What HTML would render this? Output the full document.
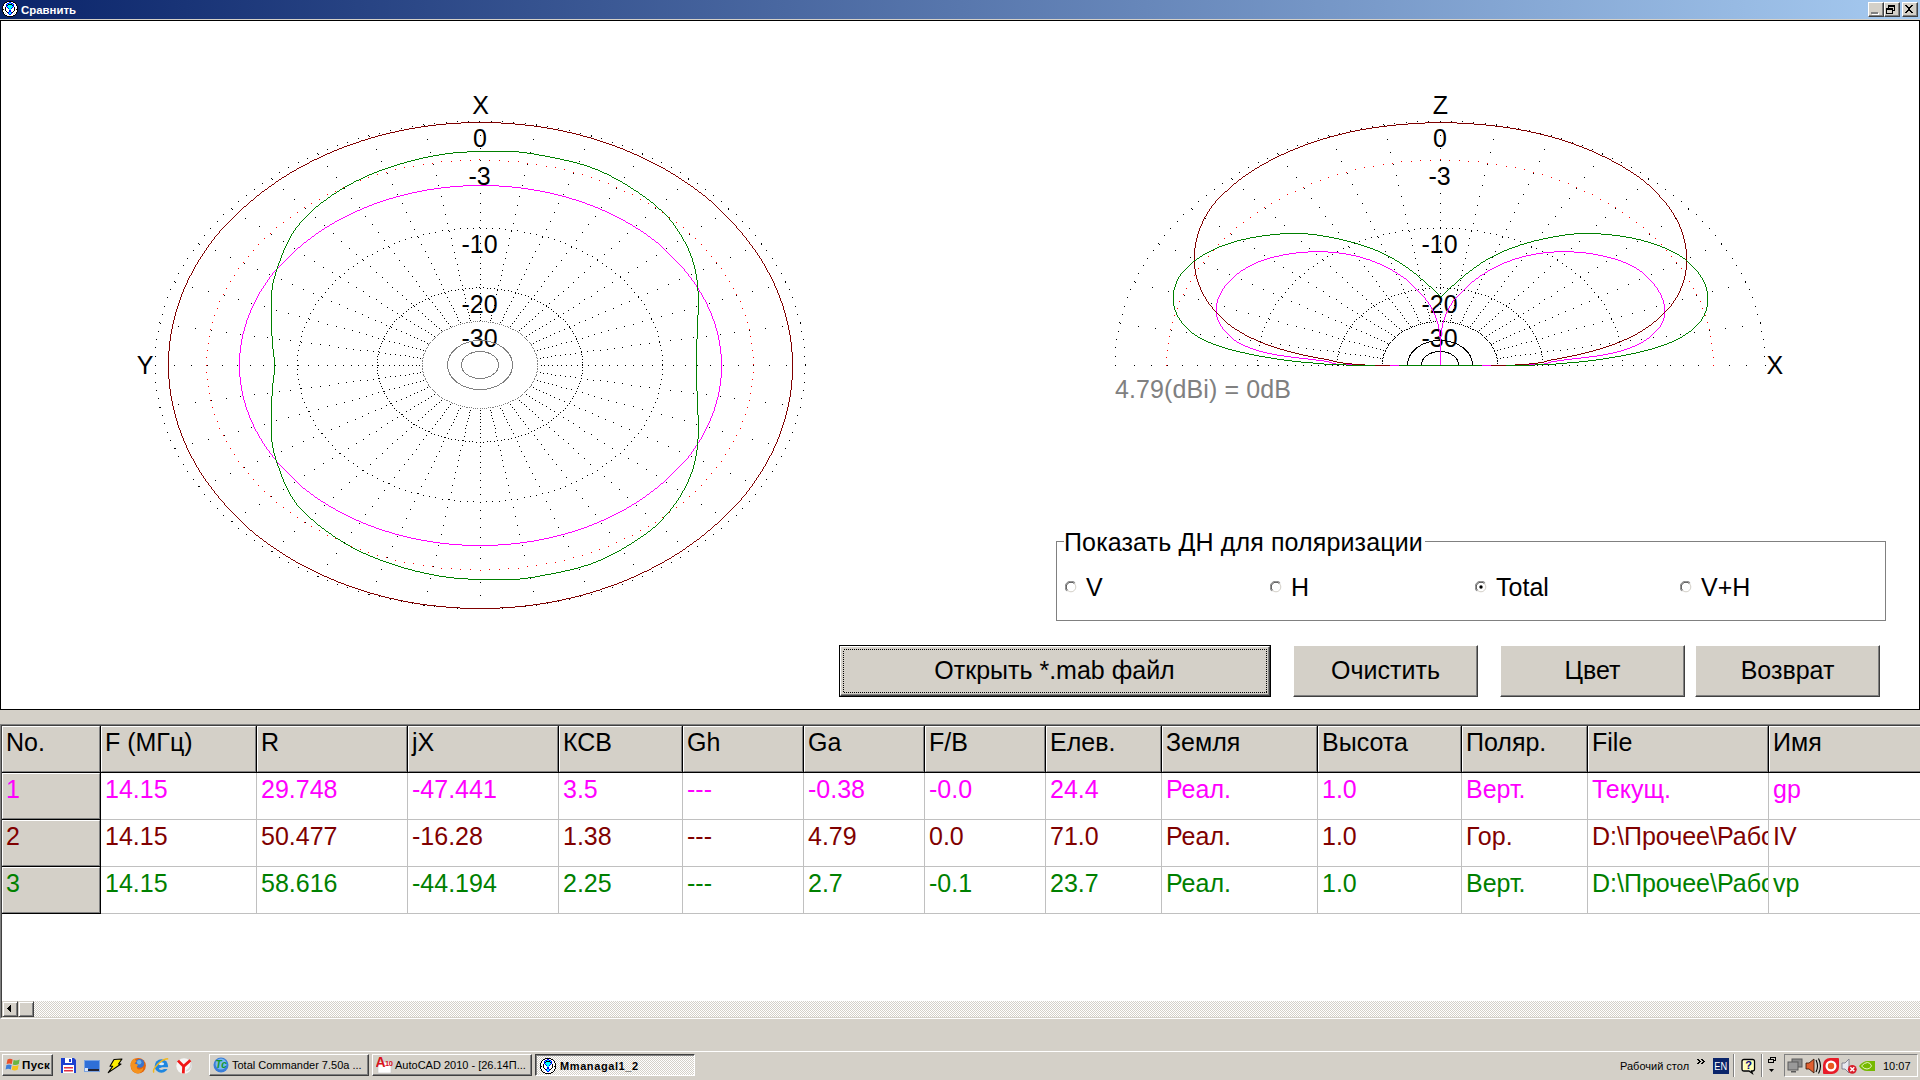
<!DOCTYPE html>
<html><head><meta charset="utf-8"><title>Сравнить</title>
<style>
*{box-sizing:border-box;margin:0;padding:0}
html,body{width:1920px;height:1080px;overflow:hidden;background:#d4d0c8;font-family:"Liberation Sans",sans-serif;color:#000}
.abs{position:absolute}
.t24{font-size:25px;line-height:28px;white-space:nowrap}
#title{position:absolute;left:0;top:0;width:1920px;height:19px;background:linear-gradient(to right,#0a246a,#a6caf0)}
#title .cap{position:absolute;left:21px;top:3px;font-size:11.4px;line-height:14px;font-weight:bold;color:#fff;white-space:nowrap}
.tb{position:absolute;top:2px;width:16px;height:15px;background:#d4d0c8;border:1px solid;border-color:#fff #404040 #404040 #fff;box-shadow:inset -1px -1px 0 #808080}
#panel{position:absolute;left:0;top:20px;width:1920px;height:690px;background:#fff;border:1px solid #000}
.btn{position:absolute;background:#d4d0c8;border:1px solid;border-color:#fff #404040 #404040 #fff;box-shadow:inset -1px -1px 0 #808080,inset 1px 1px 0 #d4d0c8;font-size:25px;text-align:center;white-space:nowrap}
.btn span{position:absolute;left:0;right:0;text-align:center;line-height:28px}
.hd{position:absolute;background:#d4d0c8;border:1px solid;border-color:#fff #808080 #808080 #fff;font-size:25px;line-height:28px;white-space:nowrap;overflow:hidden}
.hd span,.cell span{position:absolute;left:3px;top:1px}
.cell{position:absolute;background:#fff;font-size:25px;line-height:28px;white-space:nowrap;overflow:hidden}
.vl{position:absolute;width:1px}
.hl{position:absolute;height:1px}
.m{color:#ff00ff}.r{color:#800000}.g{color:#008000}
.tk{position:absolute;top:1054px;height:22px;background:#d4d0c8;border:1px solid;border-color:#fff #404040 #404040 #fff;box-shadow:inset -1px -1px 0 #808080;font-size:11px;line-height:14px;white-space:nowrap;overflow:hidden}
.tk span{position:absolute;left:22px;top:3px}
.sb{position:absolute;top:1001px;width:16px;height:16px;background:#d4d0c8;border:1px solid;border-color:#d4d0c8 #404040 #404040 #d4d0c8;box-shadow:inset 1px 1px 0 #fff,inset -1px -1px 0 #808080}
.dith{background-color:#fff;background-image:conic-gradient(#d4d0c8 25%,#fff 0 50%,#d4d0c8 0 75%,#fff 0);background-size:2px 2px}
#root{position:absolute;left:0;top:0;width:1920px;height:1080px;overflow:hidden;background:#d4d0c8}
</style></head><body><div id="root">

<div id="title">
<svg class="abs" style="left:2px;top:1px" width="16" height="16" shape-rendering="crispEdges"><rect x="5" y="0" width="6" height="1" fill="#000"/><rect x="3" y="1" width="2" height="1" fill="#000"/><rect x="5" y="1" width="2" height="1" fill="#fff"/><rect x="7" y="1" width="2" height="1" fill="#0000ff"/><rect x="9" y="1" width="2" height="1" fill="#fff"/><rect x="11" y="1" width="2" height="1" fill="#000"/><rect x="2" y="2" width="1" height="1" fill="#000"/><rect x="3" y="2" width="2" height="1" fill="#fff"/><rect x="5" y="2" width="2" height="1" fill="#0000ff"/><rect x="7" y="2" width="2" height="1" fill="#00ffff"/><rect x="9" y="2" width="2" height="1" fill="#0000ff"/><rect x="11" y="2" width="2" height="1" fill="#fff"/><rect x="13" y="2" width="1" height="1" fill="#000"/><rect x="1" y="3" width="1" height="1" fill="#000"/><rect x="2" y="3" width="2" height="1" fill="#fff"/><rect x="4" y="3" width="1" height="1" fill="#0000ff"/><rect x="5" y="3" width="1" height="1" fill="#00ffff"/><rect x="6" y="3" width="4" height="1" fill="#000"/><rect x="10" y="3" width="1" height="1" fill="#00ffff"/><rect x="11" y="3" width="1" height="1" fill="#0000ff"/><rect x="12" y="3" width="2" height="1" fill="#fff"/><rect x="14" y="3" width="1" height="1" fill="#000"/><rect x="1" y="4" width="1" height="1" fill="#000"/><rect x="2" y="4" width="2" height="1" fill="#fff"/><rect x="4" y="4" width="1" height="1" fill="#0000ff"/><rect x="5" y="4" width="1" height="1" fill="#000"/><rect x="6" y="4" width="4" height="1" fill="#00ffff"/><rect x="10" y="4" width="1" height="1" fill="#000"/><rect x="11" y="4" width="1" height="1" fill="#0000ff"/><rect x="12" y="4" width="2" height="1" fill="#fff"/><rect x="14" y="4" width="1" height="1" fill="#000"/><rect x="0" y="5" width="1" height="1" fill="#000"/><rect x="1" y="5" width="3" height="1" fill="#fff"/><rect x="4" y="5" width="1" height="1" fill="#0000ff"/><rect x="5" y="5" width="6" height="1" fill="#00ffff"/><rect x="11" y="5" width="1" height="1" fill="#0000ff"/><rect x="12" y="5" width="3" height="1" fill="#fff"/><rect x="15" y="5" width="1" height="1" fill="#000"/><rect x="0" y="6" width="1" height="1" fill="#000"/><rect x="1" y="6" width="2" height="1" fill="#fff"/><rect x="3" y="6" width="1" height="1" fill="#000"/><rect x="4" y="6" width="1" height="1" fill="#fff"/><rect x="5" y="6" width="1" height="1" fill="#0000ff"/><rect x="6" y="6" width="4" height="1" fill="#00ffff"/><rect x="10" y="6" width="1" height="1" fill="#0000ff"/><rect x="11" y="6" width="1" height="1" fill="#fff"/><rect x="12" y="6" width="1" height="1" fill="#000"/><rect x="13" y="6" width="2" height="1" fill="#fff"/><rect x="15" y="6" width="1" height="1" fill="#000"/><rect x="0" y="7" width="1" height="1" fill="#000"/><rect x="1" y="7" width="2" height="1" fill="#fff"/><rect x="3" y="7" width="1" height="1" fill="#000"/><rect x="4" y="7" width="2" height="1" fill="#fff"/><rect x="6" y="7" width="1" height="1" fill="#0000ff"/><rect x="7" y="7" width="2" height="1" fill="#00ffff"/><rect x="9" y="7" width="1" height="1" fill="#0000ff"/><rect x="10" y="7" width="2" height="1" fill="#fff"/><rect x="12" y="7" width="1" height="1" fill="#000"/><rect x="13" y="7" width="2" height="1" fill="#fff"/><rect x="15" y="7" width="1" height="1" fill="#000"/><rect x="0" y="8" width="2" height="1" fill="#000"/><rect x="2" y="8" width="1" height="1" fill="#fff"/><rect x="3" y="8" width="1" height="1" fill="#000"/><rect x="4" y="8" width="3" height="1" fill="#fff"/><rect x="7" y="8" width="2" height="1" fill="#00ffff"/><rect x="9" y="8" width="3" height="1" fill="#fff"/><rect x="12" y="8" width="1" height="1" fill="#000"/><rect x="13" y="8" width="1" height="1" fill="#fff"/><rect x="14" y="8" width="2" height="1" fill="#000"/><rect x="0" y="9" width="1" height="1" fill="#000"/><rect x="1" y="9" width="2" height="1" fill="#fff"/><rect x="3" y="9" width="1" height="1" fill="#000"/><rect x="4" y="9" width="3" height="1" fill="#fff"/><rect x="7" y="9" width="2" height="1" fill="#0000ff"/><rect x="9" y="9" width="3" height="1" fill="#fff"/><rect x="12" y="9" width="1" height="1" fill="#000"/><rect x="13" y="9" width="2" height="1" fill="#fff"/><rect x="15" y="9" width="1" height="1" fill="#000"/><rect x="0" y="10" width="1" height="1" fill="#000"/><rect x="1" y="10" width="3" height="1" fill="#fff"/><rect x="4" y="10" width="1" height="1" fill="#000"/><rect x="5" y="10" width="2" height="1" fill="#fff"/><rect x="7" y="10" width="2" height="1" fill="#0000ff"/><rect x="9" y="10" width="2" height="1" fill="#fff"/><rect x="11" y="10" width="1" height="1" fill="#000"/><rect x="12" y="10" width="3" height="1" fill="#fff"/><rect x="15" y="10" width="1" height="1" fill="#000"/><rect x="1" y="11" width="1" height="1" fill="#000"/><rect x="2" y="11" width="3" height="1" fill="#fff"/><rect x="5" y="11" width="1" height="1" fill="#000"/><rect x="6" y="11" width="1" height="1" fill="#0000ff"/><rect x="7" y="11" width="2" height="1" fill="#00ffff"/><rect x="9" y="11" width="1" height="1" fill="#0000ff"/><rect x="10" y="11" width="1" height="1" fill="#000"/><rect x="11" y="11" width="3" height="1" fill="#fff"/><rect x="14" y="11" width="1" height="1" fill="#000"/><rect x="1" y="12" width="1" height="1" fill="#000"/><rect x="2" y="12" width="1" height="1" fill="#fff"/><rect x="3" y="12" width="1" height="1" fill="#c0c0c0"/><rect x="4" y="12" width="2" height="1" fill="#fff"/><rect x="6" y="12" width="1" height="1" fill="#0000ff"/><rect x="7" y="12" width="2" height="1" fill="#00ffff"/><rect x="9" y="12" width="1" height="1" fill="#0000ff"/><rect x="10" y="12" width="2" height="1" fill="#fff"/><rect x="12" y="12" width="1" height="1" fill="#c0c0c0"/><rect x="13" y="12" width="1" height="1" fill="#fff"/><rect x="14" y="12" width="1" height="1" fill="#000"/><rect x="2" y="13" width="1" height="1" fill="#000"/><rect x="3" y="13" width="4" height="1" fill="#fff"/><rect x="7" y="13" width="2" height="1" fill="#0000ff"/><rect x="9" y="13" width="4" height="1" fill="#fff"/><rect x="13" y="13" width="1" height="1" fill="#000"/><rect x="3" y="14" width="2" height="1" fill="#000"/><rect x="5" y="14" width="6" height="1" fill="#fff"/><rect x="11" y="14" width="2" height="1" fill="#000"/><rect x="5" y="15" width="6" height="1" fill="#000"/></svg>
<div class="cap">Сравнить</div>
<div class="tb" style="left:1868px"><svg class="abs" style="left:0;top:0" width="14" height="13" shape-rendering="crispEdges"><rect x="3" y="10" width="7" height="2" fill="#fff"/><rect x="2" y="9" width="7" height="2" fill="#808080"/></svg></div>
<div class="tb" style="left:1884px"><svg class="abs" style="left:0;top:0" width="14" height="13" shape-rendering="crispEdges"><path d="M3 2h7v2h-7zM3 4h1v1h-1zM9 4h1v4h-1zM8 7h2v1h-2z" fill="#000"/><path d="M1 5h7v2h-7zM1 7h1v4h-1zM7 7h1v4h-1zM1 10h7v1h-7z" fill="#000"/></svg></div>
<div class="tb" style="left:1902px"><svg class="abs" style="left:0;top:0" width="14" height="13"><path d="M2 2h2v1h-2zM8 2h2v1h-2zM3 3h2v1h-2zM7 3h2v1h-2zM4 4h4v1h-4zM5 5h2v1h-2zM5 6h2v1h-2zM4 7h4v1h-4zM3 8h2v1h-2zM7 8h2v1h-2zM2 9h2v1h-2zM8 9h2v1h-2z" fill="#000" shape-rendering="crispEdges"/></svg></div>
</div>
<div id="panel"></div>
<div class="abs" style="left:1056px;top:541px;width:830px;height:80px;border:1px solid #808080"></div>
<div class="abs t24" style="left:1064px;top:528px;background:#fff;padding:0 2px 0 0;letter-spacing:.13px">Показать ДН для поляризации</div>
<svg class="abs" style="left:1064.5px;top:581px" width="12" height="12" viewBox="0 0 12 12"><circle cx="6" cy="6" r="5" fill="#fff"/><path d="M1.8 10.2A5.5 5.5 0 0 1 10.2 1.8" fill="none" stroke="#808080" stroke-width="1"/><path d="M2.6 9.4A4.5 4.5 0 0 1 9.4 2.6" fill="none" stroke="#404040" stroke-width="1"/><path d="M9.4 2.6A4.5 4.5 0 0 1 2.6 9.4" fill="none" stroke="#d4d0c8" stroke-width="1"/></svg>
<div class="abs t24" style="left:1086.1px;top:573px">V</div>
<svg class="abs" style="left:1269.5px;top:581px" width="12" height="12" viewBox="0 0 12 12"><circle cx="6" cy="6" r="5" fill="#fff"/><path d="M1.8 10.2A5.5 5.5 0 0 1 10.2 1.8" fill="none" stroke="#808080" stroke-width="1"/><path d="M2.6 9.4A4.5 4.5 0 0 1 9.4 2.6" fill="none" stroke="#404040" stroke-width="1"/><path d="M9.4 2.6A4.5 4.5 0 0 1 2.6 9.4" fill="none" stroke="#d4d0c8" stroke-width="1"/></svg>
<div class="abs t24" style="left:1291.1px;top:573px">H</div>
<svg class="abs" style="left:1474.5px;top:581px" width="12" height="12" viewBox="0 0 12 12"><circle cx="6" cy="6" r="5" fill="#fff"/><path d="M1.8 10.2A5.5 5.5 0 0 1 10.2 1.8" fill="none" stroke="#808080" stroke-width="1"/><path d="M2.6 9.4A4.5 4.5 0 0 1 9.4 2.6" fill="none" stroke="#404040" stroke-width="1"/><path d="M9.4 2.6A4.5 4.5 0 0 1 2.6 9.4" fill="none" stroke="#d4d0c8" stroke-width="1"/><circle cx="6" cy="6" r="1.7" fill="#000"/></svg>
<div class="abs t24" style="left:1496.1px;top:573px">Total</div>
<svg class="abs" style="left:1679.5px;top:581px" width="12" height="12" viewBox="0 0 12 12"><circle cx="6" cy="6" r="5" fill="#fff"/><path d="M1.8 10.2A5.5 5.5 0 0 1 10.2 1.8" fill="none" stroke="#808080" stroke-width="1"/><path d="M2.6 9.4A4.5 4.5 0 0 1 9.4 2.6" fill="none" stroke="#404040" stroke-width="1"/><path d="M9.4 2.6A4.5 4.5 0 0 1 2.6 9.4" fill="none" stroke="#d4d0c8" stroke-width="1"/></svg>
<div class="abs t24" style="left:1701.1px;top:573px">V+H</div>
<div class="abs" style="left:839px;top:645px;width:432px;height:52px;border:1px solid #000"></div>
<div class="btn" style="left:840px;top:646px;width:430px;height:50px"><span style="top:9px;left:-1px">Открыть *.mab файл</span><svg class="abs" style="left:2px;top:2px" width="424" height="44" shape-rendering="crispEdges"><rect x=".5" y=".5" width="423" height="43" fill="none" stroke="#000" stroke-width="1" stroke-dasharray="1 1"/></svg></div>
<div class="btn" style="left:1293px;top:645px;width:185px;height:52px"><span style="top:10px">Очистить</span></div>
<div class="btn" style="left:1500px;top:645px;width:185px;height:52px"><span style="top:10px">Цвет</span></div>
<div class="btn" style="left:1695px;top:645px;width:185px;height:52px"><span style="top:10px">Возврат</span></div>
<svg class="abs" style="left:0;top:0" width="1920" height="720" viewBox="0 0 1920 720">
<g shape-rendering="crispEdges" fill="none" stroke-width="1">
<path transform="translate(0,.5)" stroke="#000" d="M541 365h1M544 365h1M548 365h1M552 365h1M557 365h1M561 365h1M566 365h1M571 365h1M577 365h1M582 365h1M588 365h1M595 365h1M602 365h1M609 365h1M617 365h1M625 365h1M633 365h1M642 365h1M652 365h1M662 365h1M673 365h1M685 365h1M697 365h1M710 365h1M723 365h1M738 365h1M753 365h1M769 365h1M786 365h1M805 365h1M540 358h1M543 357h1M547 357h1M551 356h1M555 355h1M560 355h1M565 354h1M570 354h1M575 353h1M581 352h1M587 351h1M593 350h1M600 350h1M607 349h1M614 348h1M622 347h1M631 345h1M640 344h1M649 343h1M659 342h1M670 340h1M681 339h1M693 337h1M706 336h1M720 334h1M734 332h1M749 330h1M765 328h1M782 326h1M800 323h1M537 350h1M540 349h1M544 348h1M548 347h1M552 346h1M556 345h1M561 343h1M566 342h1M571 341h1M576 339h1M582 338h1M588 336h1M594 334h1M601 332h1M608 330h1M616 328h1M624 326h1M633 324h1M642 321h1M651 319h1M661 316h1M672 313h1M684 310h1M696 306h1M709 303h1M722 299h1M736 295h1M752 291h1M768 287h1M785 282h1M533 343h1M536 341h1M539 340h1M543 338h1M546 337h1M550 335h1M554 333h1M559 331h1M564 329h1M569 327h1M574 325h1M579 322h1M585 320h1M592 317h1M598 314h1M605 311h1M613 308h1M621 304h1M629 301h1M638 297h1M647 293h1M657 289h1M668 284h1M679 279h1M691 274h1M703 269h1M716 263h1M730 257h1M745 250h1M761 244h1M526 336h1M529 334h1M532 332h1M535 330h1M539 328h1M542 326h1M546 324h1M550 321h1M554 319h1M558 316h1M563 313h1M568 310h1M573 307h1M579 303h1M584 299h1M591 296h1M597 291h1M604 287h1M612 282h1M620 277h1M628 272h1M637 267h1M646 261h1M656 255h1M666 248h1M677 241h1M689 234h1M701 226h1M715 218h1M728 209h1M519 330h1M521 328h1M524 326h1M526 324h1M529 321h1M532 319h1M535 316h1M538 313h1M542 310h1M546 306h1M549 303h1M554 299h1M558 295h1M563 291h1M568 287h1M573 282h1M578 277h1M584 272h1M590 266h1M597 260h1M604 254h1M611 248h1M619 241h1M627 233h1M636 225h1M645 217h1M655 208h1M666 199h1M677 189h1M688 179h1M510 326h1M512 323h1M514 321h1M516 318h1M518 315h1M520 312h1M523 309h1M525 306h1M528 302h1M531 299h1M534 295h1M537 291h1M541 286h1M544 281h1M548 276h1M552 271h1M556 266h1M561 260h1M566 253h1M571 247h1M576 240h1M582 232h1M588 224h1M595 216h1M601 207h1M609 198h1M616 188h1M624 177h1M633 166h1M642 154h1M500 322h1M502 320h1M503 317h1M504 314h1M506 311h1M507 308h1M509 305h1M511 301h1M513 297h1M515 293h1M517 289h1M519 284h1M521 279h1M524 274h1M526 269h1M529 263h1M532 257h1M535 251h1M539 244h1M542 237h1M546 229h1M550 221h1M554 212h1M558 203h1M563 194h1M568 184h1M573 173h1M579 161h1M584 149h1M591 136h1M490 320h1M491 318h1M491 315h1M492 312h1M493 309h1M494 305h1M495 302h1M495 298h1M496 294h1M497 290h1M498 285h1M500 280h1M501 275h1M502 270h1M503 264h1M505 258h1M506 252h1M508 245h1M509 238h1M511 231h1M513 223h1M515 214h1M517 205h1M519 196h1M522 185h1M524 175h1M527 164h1M530 152h1M533 139h1M536 125h1M480 320h1M480 317h1M480 314h1M480 311h1M480 308h1M480 304h1M480 301h1M480 297h1M480 293h1M480 288h1M480 284h1M480 279h1M480 274h1M480 268h1M480 263h1M480 257h1M480 250h1M480 243h1M480 236h1M480 228h1M480 220h1M480 212h1M480 203h1M480 193h1M480 183h1M480 172h1M480 160h1M480 148h1M480 135h1M480 122h1M470 320h1M469 318h1M469 315h1M468 312h1M467 309h1M466 305h1M465 302h1M465 298h1M464 294h1M463 290h1M462 285h1M460 280h1M459 275h1M458 270h1M457 264h1M455 258h1M454 252h1M452 245h1M451 238h1M449 231h1M447 223h1M445 214h1M443 205h1M441 196h1M438 185h1M436 175h1M433 164h1M430 152h1M427 139h1M424 125h1M460 322h1M458 320h1M457 317h1M456 314h1M454 311h1M453 308h1M451 305h1M449 301h1M447 297h1M445 293h1M443 289h1M441 284h1M439 279h1M436 274h1M434 269h1M431 263h1M428 257h1M425 251h1M421 244h1M418 237h1M414 229h1M410 221h1M406 212h1M402 203h1M397 194h1M392 184h1M387 173h1M381 161h1M376 149h1M369 136h1M450 326h1M448 323h1M446 321h1M444 318h1M442 315h1M440 312h1M437 309h1M435 306h1M432 302h1M429 299h1M426 295h1M423 291h1M419 286h1M416 281h1M412 276h1M408 271h1M404 266h1M399 260h1M394 253h1M389 247h1M384 240h1M378 232h1M372 224h1M365 216h1M359 207h1M351 198h1M344 188h1M336 177h1M327 166h1M318 154h1M441 330h1M439 328h1M436 326h1M434 324h1M431 321h1M428 319h1M425 316h1M422 313h1M418 310h1M414 306h1M411 303h1M406 299h1M402 295h1M397 291h1M392 287h1M387 282h1M382 277h1M376 272h1M370 266h1M363 260h1M356 254h1M349 248h1M341 241h1M333 233h1M324 225h1M315 217h1M305 208h1M294 199h1M283 189h1M272 179h1M434 336h1M431 334h1M428 332h1M425 330h1M421 328h1M418 326h1M414 324h1M410 321h1M406 319h1M402 316h1M397 313h1M392 310h1M387 307h1M381 303h1M376 299h1M369 296h1M363 291h1M356 287h1M348 282h1M340 277h1M332 272h1M323 267h1M314 261h1M304 255h1M294 248h1M283 241h1M271 234h1M259 226h1M245 218h1M232 209h1M427 343h1M424 341h1M421 340h1M417 338h1M414 337h1M410 335h1M406 333h1M401 331h1M396 329h1M391 327h1M386 325h1M381 322h1M375 320h1M368 317h1M362 314h1M355 311h1M347 308h1M339 304h1M331 301h1M322 297h1M313 293h1M303 289h1M292 284h1M281 279h1M269 274h1M257 269h1M244 263h1M230 257h1M215 250h1M199 244h1M423 350h1M420 349h1M416 348h1M412 347h1M408 346h1M404 345h1M399 343h1M394 342h1M389 341h1M384 339h1M378 338h1M372 336h1M366 334h1M359 332h1M352 330h1M344 328h1M336 326h1M327 324h1M318 321h1M309 319h1M299 316h1M288 313h1M276 310h1M264 306h1M251 303h1M238 299h1M224 295h1M208 291h1M192 287h1M175 282h1M420 358h1M417 357h1M413 357h1M409 356h1M405 355h1M400 355h1M395 354h1M390 354h1M385 353h1M379 352h1M373 351h1M367 350h1M360 350h1M353 349h1M346 348h1M338 347h1M329 345h1M320 344h1M311 343h1M301 342h1M290 340h1M279 339h1M267 337h1M254 336h1M240 334h1M226 332h1M211 330h1M195 328h1M178 326h1M160 323h1M419 365h1M416 365h1M412 365h1M408 365h1M403 365h1M399 365h1M394 365h1M389 365h1M383 365h1M378 365h1M372 365h1M365 365h1M358 365h1M351 365h1M343 365h1M335 365h1M327 365h1M318 365h1M308 365h1M298 365h1M287 365h1M275 365h1M263 365h1M250 365h1M237 365h1M222 365h1M207 365h1M191 365h1M174 365h1M155 365h1M420 372h1M417 373h1M413 373h1M409 374h1M405 375h1M400 375h1M395 376h1M390 376h1M385 377h1M379 378h1M373 379h1M367 380h1M360 380h1M353 381h1M346 382h1M338 383h1M329 385h1M320 386h1M311 387h1M301 388h1M290 390h1M279 391h1M267 393h1M254 394h1M240 396h1M226 398h1M211 400h1M195 402h1M178 404h1M160 407h1M423 380h1M420 381h1M416 382h1M412 383h1M408 384h1M404 385h1M399 387h1M394 388h1M389 389h1M384 391h1M378 392h1M372 394h1M366 396h1M359 398h1M352 400h1M344 402h1M336 404h1M327 406h1M318 409h1M309 411h1M299 414h1M288 417h1M276 420h1M264 424h1M251 427h1M238 431h1M224 435h1M208 439h1M192 443h1M175 448h1M427 387h1M424 389h1M421 390h1M417 392h1M414 393h1M410 395h1M406 397h1M401 399h1M396 401h1M391 403h1M386 405h1M381 408h1M375 410h1M368 413h1M362 416h1M355 419h1M347 422h1M339 426h1M331 429h1M322 433h1M313 437h1M303 441h1M292 446h1M281 451h1M269 456h1M257 461h1M244 467h1M230 473h1M215 480h1M199 486h1M434 394h1M431 396h1M428 398h1M425 400h1M421 402h1M418 404h1M414 406h1M410 409h1M406 411h1M402 414h1M397 417h1M392 420h1M387 423h1M381 427h1M376 431h1M369 434h1M363 439h1M356 443h1M348 448h1M340 453h1M332 458h1M323 463h1M314 469h1M304 475h1M294 482h1M283 489h1M271 496h1M259 504h1M245 512h1M232 521h1M441 400h1M439 402h1M436 404h1M434 406h1M431 409h1M428 411h1M425 414h1M422 417h1M418 420h1M414 424h1M411 427h1M406 431h1M402 435h1M397 439h1M392 443h1M387 448h1M382 453h1M376 458h1M370 464h1M363 470h1M356 476h1M349 482h1M341 489h1M333 497h1M324 505h1M315 513h1M305 522h1M294 531h1M283 541h1M272 551h1M450 404h1M448 407h1M446 409h1M444 412h1M442 415h1M440 418h1M437 421h1M435 424h1M432 428h1M429 431h1M426 435h1M423 439h1M419 444h1M416 449h1M412 454h1M408 459h1M404 464h1M399 470h1M394 477h1M389 483h1M384 490h1M378 498h1M372 506h1M365 514h1M359 523h1M351 532h1M344 542h1M336 553h1M327 564h1M318 576h1M460 408h1M458 410h1M457 413h1M456 416h1M454 419h1M453 422h1M451 425h1M449 429h1M447 433h1M445 437h1M443 441h1M441 446h1M439 451h1M436 456h1M434 461h1M431 467h1M428 473h1M425 479h1M421 486h1M418 493h1M414 501h1M410 509h1M406 518h1M402 527h1M397 536h1M392 546h1M387 557h1M381 569h1M376 581h1M369 594h1M470 410h1M469 412h1M469 415h1M468 418h1M467 421h1M466 425h1M465 428h1M465 432h1M464 436h1M463 440h1M462 445h1M460 450h1M459 455h1M458 460h1M457 466h1M455 472h1M454 478h1M452 485h1M451 492h1M449 499h1M447 507h1M445 516h1M443 525h1M441 534h1M438 545h1M436 555h1M433 566h1M430 578h1M427 591h1M424 605h1M480 410h1M480 413h1M480 416h1M480 419h1M480 422h1M480 426h1M480 429h1M480 433h1M480 437h1M480 442h1M480 446h1M480 451h1M480 456h1M480 462h1M480 467h1M480 473h1M480 480h1M480 487h1M480 494h1M480 502h1M480 510h1M480 518h1M480 527h1M480 537h1M480 547h1M480 558h1M480 570h1M480 582h1M480 595h1M480 608h1M490 410h1M491 412h1M491 415h1M492 418h1M493 421h1M494 425h1M495 428h1M495 432h1M496 436h1M497 440h1M498 445h1M500 450h1M501 455h1M502 460h1M503 466h1M505 472h1M506 478h1M508 485h1M509 492h1M511 499h1M513 507h1M515 516h1M517 525h1M519 534h1M522 545h1M524 555h1M527 566h1M530 578h1M533 591h1M536 605h1M500 408h1M502 410h1M503 413h1M504 416h1M506 419h1M507 422h1M509 425h1M511 429h1M513 433h1M515 437h1M517 441h1M519 446h1M521 451h1M524 456h1M526 461h1M529 467h1M532 473h1M535 479h1M539 486h1M542 493h1M546 501h1M550 509h1M554 518h1M558 527h1M563 536h1M568 546h1M573 557h1M579 569h1M584 581h1M591 594h1M510 404h1M512 407h1M514 409h1M516 412h1M518 415h1M520 418h1M523 421h1M525 424h1M528 428h1M531 431h1M534 435h1M537 439h1M541 444h1M544 449h1M548 454h1M552 459h1M556 464h1M561 470h1M566 477h1M571 483h1M576 490h1M582 498h1M588 506h1M595 514h1M601 523h1M609 532h1M616 542h1M624 553h1M633 564h1M642 576h1M519 400h1M521 402h1M524 404h1M526 406h1M529 409h1M532 411h1M535 414h1M538 417h1M542 420h1M546 424h1M549 427h1M554 431h1M558 435h1M563 439h1M568 443h1M573 448h1M578 453h1M584 458h1M590 464h1M597 470h1M604 476h1M611 482h1M619 489h1M627 497h1M636 505h1M645 513h1M655 522h1M666 531h1M677 541h1M688 551h1M526 394h1M529 396h1M532 398h1M535 400h1M539 402h1M542 404h1M546 406h1M550 409h1M554 411h1M558 414h1M563 417h1M568 420h1M573 423h1M579 427h1M584 431h1M591 434h1M597 439h1M604 443h1M612 448h1M620 453h1M628 458h1M637 463h1M646 469h1M656 475h1M666 482h1M677 489h1M689 496h1M701 504h1M715 512h1M728 521h1M533 387h1M536 389h1M539 390h1M543 392h1M546 393h1M550 395h1M554 397h1M559 399h1M564 401h1M569 403h1M574 405h1M579 408h1M585 410h1M592 413h1M598 416h1M605 419h1M613 422h1M621 426h1M629 429h1M638 433h1M647 437h1M657 441h1M668 446h1M679 451h1M691 456h1M703 461h1M716 467h1M730 473h1M745 480h1M761 486h1M537 380h1M540 381h1M544 382h1M548 383h1M552 384h1M556 385h1M561 387h1M566 388h1M571 389h1M576 391h1M582 392h1M588 394h1M594 396h1M601 398h1M608 400h1M616 402h1M624 404h1M633 406h1M642 409h1M651 411h1M661 414h1M672 417h1M684 420h1M696 424h1M709 427h1M722 431h1M736 435h1M752 439h1M768 443h1M785 448h1M540 372h1M543 373h1M547 373h1M551 374h1M555 375h1M560 375h1M565 376h1M570 376h1M575 377h1M581 378h1M587 379h1M593 380h1M600 380h1M607 381h1M614 382h1M622 383h1M631 385h1M640 386h1M649 387h1M659 388h1M670 390h1M681 391h1M693 393h1M706 394h1M720 396h1M734 398h1M749 400h1M765 402h1M782 404h1M800 407h1M805 364h1M804 356h1M804 347h1M803 339h1M801 331h1M800 322h1M797 314h1M795 306h1M792 297h1M789 289h1M785 281h1M781 273h1M776 265h1M772 258h1M766 250h1M761 243h1M755 235h1M749 228h1M742 221h1M736 214h1M728 208h1M721 201h1M713 195h1M705 189h1M697 183h1M688 178h1M680 172h1M671 167h1M661 162h1M652 158h1M642 153h1M632 149h1M622 145h1M612 142h1M601 138h1M591 135h1M580 133h1M569 130h1M558 128h1M547 126h1M536 124h1M525 123h1M513 122h1M502 121h1M491 121h1M479 121h1M468 121h1M457 121h1M446 122h1M434 123h1M423 124h1M412 126h1M401 128h1M390 130h1M379 133h1M368 135h1M358 138h1M347 142h1M337 145h1M327 149h1M317 153h1M307 158h1M298 162h1M288 167h1M279 172h1M271 178h1M262 183h1M254 189h1M246 195h1M238 201h1M231 208h1M223 214h1M217 221h1M210 228h1M204 235h1M198 243h1M193 250h1M187 258h1M183 265h1M178 273h1M174 281h1M170 289h1M167 297h1M164 306h1M162 314h1M159 322h1M158 331h1M156 339h1M155 347h1M155 356h1M155 373h1M155 382h1M156 390h1M158 398h1M159 407h1M162 415h1M164 423h1M167 432h1M170 440h1M174 448h1M178 456h1M183 464h1M187 471h1M193 479h1M198 486h1M204 494h1M210 501h1M217 508h1M223 515h1M231 521h1M238 528h1M246 534h1M254 540h1M262 546h1M271 551h1M279 557h1M288 562h1M298 567h1M307 571h1M317 576h1M327 580h1M337 584h1M347 587h1M358 591h1M368 594h1M379 596h1M390 599h1M401 601h1M412 603h1M423 605h1M434 606h1M446 607h1M457 608h1M468 608h1M491 608h1M502 608h1M513 607h1M525 606h1M547 603h1M558 601h1M569 599h1M580 596h1M601 591h1M612 587h1M622 584h1M632 580h1M652 571h1M661 567h1M671 562h1M680 557h1M697 546h1M705 540h1M713 534h1M721 528h1M736 515h1M742 508h1M749 501h1M755 494h1M766 479h1M772 471h1M776 464h1M781 456h1M789 440h1M792 432h1M795 423h1M797 415h1M801 398h1M803 390h1M804 382h1M804 373h1M662 364h1M662 360h1M662 355h1M661 350h1M660 345h1M659 341h1M658 336h1M657 331h1M655 327h1M653 322h1M651 318h1M649 313h1M646 309h1M644 304h1M641 300h1M638 296h1M634 292h1M631 288h1M627 284h1M624 280h1M620 276h1M615 273h1M611 269h1M606 266h1M602 263h1M597 259h1M592 256h1M587 254h1M582 251h1M576 248h1M571 246h1M565 243h1M560 241h1M554 239h1M548 237h1M542 236h1M536 234h1M530 233h1M524 232h1M517 230h1M511 230h1M505 229h1M499 228h1M492 228h1M486 228h1M479 227h1M473 228h1M467 228h1M460 228h1M454 229h1M448 230h1M442 230h1M435 232h1M429 233h1M423 234h1M417 236h1M411 237h1M405 239h1M399 241h1M394 243h1M388 246h1M383 248h1M377 251h1M372 254h1M367 256h1M362 259h1M357 263h1M353 266h1M348 269h1M344 273h1M339 276h1M335 280h1M332 284h1M328 288h1M325 292h1M321 296h1M318 300h1M315 304h1M313 309h1M310 313h1M308 318h1M306 322h1M304 327h1M302 331h1M301 336h1M300 341h1M299 345h1M298 350h1M297 355h1M297 360h1M297 365h1M297 369h1M297 374h1M298 379h1M299 384h1M300 388h1M301 393h1M302 398h1M304 402h1M306 407h1M308 411h1M310 416h1M313 420h1M315 425h1M318 429h1M321 433h1M325 437h1M328 441h1M332 445h1M335 449h1M339 453h1M344 456h1M348 460h1M353 463h1M357 466h1M362 470h1M367 473h1M372 475h1M377 478h1M383 481h1M388 483h1M394 486h1M399 488h1M405 490h1M411 492h1M417 493h1M423 495h1M429 496h1M435 497h1M442 499h1M448 499h1M454 500h1M460 501h1M467 501h1M473 501h1M486 501h1M492 501h1M499 501h1M505 500h1M517 499h1M524 497h1M530 496h1M536 495h1M548 492h1M554 490h1M560 488h1M565 486h1M576 481h1M582 478h1M587 475h1M592 473h1M602 466h1M606 463h1M611 460h1M615 456h1M624 449h1M627 445h1M631 441h1M634 437h1M641 429h1M644 425h1M646 420h1M649 416h1M653 407h1M655 402h1M657 398h1M658 393h1M660 384h1M661 379h1M662 374h1M662 369h1M582 364h1M582 362h1M582 359h1M582 356h1M581 354h1M581 351h1M580 348h1M579 346h1M578 343h1M577 341h1M576 338h1M575 336h1M573 333h1M572 331h1M570 328h1M569 326h1M567 324h1M565 321h1M563 319h1M560 317h1M558 315h1M556 313h1M553 311h1M551 309h1M548 307h1M546 305h1M543 304h1M540 302h1M537 301h1M534 299h1M531 298h1M528 296h1M525 295h1M521 294h1M518 293h1M515 292h1M511 291h1M508 290h1M504 290h1M501 289h1M497 289h1M494 288h1M490 288h1M487 288h1M483 287h1M479 287h1M476 287h1M472 288h1M469 288h1M465 288h1M462 289h1M458 289h1M455 290h1M451 290h1M448 291h1M444 292h1M441 293h1M438 294h1M434 295h1M431 296h1M428 298h1M425 299h1M422 301h1M419 302h1M416 304h1M413 305h1M411 307h1M408 309h1M406 311h1M403 313h1M401 315h1M399 317h1M396 319h1M394 321h1M392 324h1M390 326h1M389 328h1M387 331h1M386 333h1M384 336h1M383 338h1M382 341h1M381 343h1M380 346h1M379 348h1M378 351h1M378 354h1M377 356h1M377 359h1M377 362h1M377 365h1M377 367h1M377 370h1M377 373h1M378 375h1M378 378h1M379 381h1M380 383h1M381 386h1M382 388h1M383 391h1M384 393h1M386 396h1M387 398h1M389 401h1M390 403h1M392 405h1M394 408h1M396 410h1M399 412h1M401 414h1M403 416h1M406 418h1M408 420h1M411 422h1M413 424h1M416 425h1M419 427h1M422 428h1M425 430h1M428 431h1M431 433h1M434 434h1M438 435h1M441 436h1M444 437h1M448 438h1M451 439h1M455 439h1M458 440h1M462 440h1M465 441h1M469 441h1M472 441h1M476 442h1M483 442h1M487 441h1M490 441h1M494 441h1M501 440h1M504 439h1M508 439h1M511 438h1M518 436h1M521 435h1M525 434h1M528 433h1M534 430h1M537 428h1M540 427h1M543 425h1M548 422h1M551 420h1M553 418h1M556 416h1M560 412h1M563 410h1M565 408h1M567 405h1M570 401h1M572 398h1M573 396h1M575 393h1M577 388h1M578 386h1M579 383h1M580 381h1M581 375h1M582 373h1M582 370h1M582 367h1"/>
<path transform="translate(0,.5)" stroke="#f00" d="M753 364h1M753 357h1M752 350h1M751 343h1M750 336h1M749 329h1M747 322h1M745 315h1M742 308h1M740 301h1M736 294h1M733 288h1M729 281h1M725 275h1M721 268h1M716 262h1M711 256h1M706 250h1M701 244h1M695 238h1M689 233h1M683 227h1M676 222h1M669 217h1M662 212h1M655 207h1M648 203h1M640 199h1M632 194h1M624 191h1M616 187h1M608 183h1M599 180h1M591 177h1M582 174h1M573 172h1M564 169h1M555 167h1M546 166h1M536 164h1M527 163h1M518 161h1M508 161h1M499 160h1M489 160h1M479 159h1M470 160h1M460 160h1M451 161h1M441 161h1M432 163h1M423 164h1M413 166h1M404 167h1M395 169h1M386 172h1M377 174h1M368 177h1M360 180h1M351 183h1M343 187h1M335 191h1M327 194h1M319 199h1M311 203h1M304 207h1M297 212h1M290 217h1M283 222h1M276 227h1M270 233h1M264 238h1M258 244h1M253 250h1M248 256h1M243 262h1M238 268h1M234 275h1M230 281h1M226 288h1M223 294h1M219 301h1M217 308h1M214 315h1M212 322h1M210 329h1M209 336h1M208 343h1M207 350h1M206 357h1M206 365h1M206 372h1M207 379h1M208 386h1M209 393h1M210 400h1M212 407h1M214 414h1M217 421h1M219 428h1M223 435h1M226 441h1M230 448h1M234 454h1M238 461h1M243 467h1M248 473h1M253 479h1M258 485h1M264 491h1M270 496h1M276 502h1M283 507h1M290 512h1M297 517h1M304 522h1M311 526h1M319 530h1M327 535h1M335 538h1M343 542h1M351 546h1M360 549h1M368 552h1M377 555h1M386 557h1M395 560h1M404 562h1M413 563h1M423 565h1M432 566h1M441 568h1M451 568h1M460 569h1M470 569h1M480 570h1M489 569h1M499 569h1M508 568h1M518 568h1M527 566h1M536 565h1M546 563h1M555 562h1M564 560h1M573 557h1M582 555h1M591 552h1M599 549h1M608 546h1M616 542h1M624 538h1M632 535h1M640 530h1M648 526h1M655 522h1M662 517h1M669 512h1M676 507h1M683 502h1M689 496h1M695 491h1M701 485h1M706 479h1M711 473h1M716 467h1M721 461h1M725 454h1M729 448h1M733 441h1M736 435h1M740 428h1M742 421h1M745 414h1M747 407h1M749 400h1M750 393h1M751 386h1M752 379h1M753 372h1"/>
<path transform="translate(0,.5)" stroke="#808080" d="M537 364h1M537 363h1M537 361h1M537 360h1M537 358h1M536 357h1M536 355h1M536 354h1M535 353h1M534 351h1M534 350h1M533 348h1M532 347h1M531 345h1M531 344h1M530 343h1M529 342h1M527 340h1M526 339h1M525 338h1M524 337h1M522 335h1M521 334h1M520 333h1M518 332h1M517 331h1M515 330h1M513 329h1M512 329h1M510 328h1M508 327h1M507 326h1M505 326h1M503 325h1M501 324h1M499 324h1M497 323h1M495 323h1M493 322h1M492 322h1M490 322h1M488 322h1M486 321h1M484 321h1M482 321h1M479 321h1M477 321h1M475 321h1M473 321h1M471 322h1M469 322h1M467 322h1M466 322h1M464 323h1M462 323h1M460 324h1M458 324h1M456 325h1M454 326h1M452 326h1M451 327h1M449 328h1M447 329h1M446 329h1M444 330h1M442 331h1M441 332h1M439 333h1M438 334h1M437 335h1M435 337h1M434 338h1M433 339h1M432 340h1M430 342h1M429 343h1M428 344h1M428 345h1M427 347h1M426 348h1M425 350h1M425 351h1M424 353h1M423 354h1M423 355h1M423 357h1M422 358h1M422 360h1M422 361h1M422 363h1M422 365h1M422 366h1M422 368h1M422 369h1M422 371h1M423 372h1M423 374h1M423 375h1M424 376h1M425 378h1M425 379h1M426 381h1M427 382h1M428 384h1M428 385h1M429 386h1M430 387h1M432 389h1M433 390h1M434 391h1M435 392h1M437 394h1M438 395h1M439 396h1M441 397h1M442 398h1M444 399h1M446 400h1M447 400h1M449 401h1M451 402h1M452 403h1M454 403h1M456 404h1M458 405h1M460 405h1M462 406h1M464 406h1M466 407h1M467 407h1M469 407h1M471 407h1M473 408h1M475 408h1M477 408h1M480 408h1M482 408h1M484 408h1M486 408h1M488 407h1M490 407h1M492 407h1M493 407h1M495 406h1M497 406h1M499 405h1M501 405h1M503 404h1M505 403h1M507 403h1M508 402h1M510 401h1M512 400h1M513 400h1M515 399h1M517 398h1M518 397h1M520 396h1M521 395h1M522 394h1M524 392h1M525 391h1M526 390h1M527 389h1M529 387h1M530 386h1M531 385h1M531 384h1M532 382h1M533 381h1M534 379h1M534 378h1M535 376h1M536 375h1M536 374h1M536 372h1M537 371h1M537 369h1M537 368h1M537 366h1"/>
<path transform="translate(0,.5)" stroke="#000" d="M1501 365h1M1504 365h1M1508 365h1M1512 365h1M1517 365h1M1521 365h1M1526 365h1M1531 365h1M1537 365h1M1542 365h1M1548 365h1M1555 365h1M1562 365h1M1569 365h1M1577 365h1M1585 365h1M1593 365h1M1602 365h1M1612 365h1M1622 365h1M1633 365h1M1645 365h1M1657 365h1M1670 365h1M1683 365h1M1698 365h1M1713 365h1M1729 365h1M1746 365h1M1765 365h1M1500 358h1M1503 357h1M1507 357h1M1511 356h1M1515 355h1M1520 355h1M1525 354h1M1530 354h1M1535 353h1M1541 352h1M1547 351h1M1553 350h1M1560 350h1M1567 349h1M1574 348h1M1582 347h1M1591 345h1M1600 344h1M1609 343h1M1619 342h1M1630 340h1M1641 339h1M1653 337h1M1666 336h1M1680 334h1M1694 332h1M1709 330h1M1725 328h1M1742 326h1M1760 323h1M1497 350h1M1500 349h1M1504 348h1M1508 347h1M1512 346h1M1516 345h1M1521 343h1M1526 342h1M1531 341h1M1536 339h1M1542 338h1M1548 336h1M1554 334h1M1561 332h1M1568 330h1M1576 328h1M1584 326h1M1593 324h1M1602 321h1M1611 319h1M1621 316h1M1632 313h1M1644 310h1M1656 306h1M1669 303h1M1682 299h1M1696 295h1M1712 291h1M1728 287h1M1745 282h1M1493 343h1M1496 341h1M1499 340h1M1503 338h1M1506 337h1M1510 335h1M1514 333h1M1519 331h1M1524 329h1M1529 327h1M1534 325h1M1539 322h1M1545 320h1M1552 317h1M1558 314h1M1565 311h1M1573 308h1M1581 304h1M1589 301h1M1598 297h1M1607 293h1M1617 289h1M1628 284h1M1639 279h1M1651 274h1M1663 269h1M1676 263h1M1690 257h1M1705 250h1M1721 244h1M1486 336h1M1489 334h1M1492 332h1M1495 330h1M1499 328h1M1502 326h1M1506 324h1M1510 321h1M1514 319h1M1518 316h1M1523 313h1M1528 310h1M1533 307h1M1539 303h1M1544 299h1M1551 296h1M1557 291h1M1564 287h1M1572 282h1M1580 277h1M1588 272h1M1597 267h1M1606 261h1M1616 255h1M1626 248h1M1637 241h1M1649 234h1M1661 226h1M1675 218h1M1688 209h1M1479 330h1M1481 328h1M1484 326h1M1486 324h1M1489 321h1M1492 319h1M1495 316h1M1498 313h1M1502 310h1M1506 306h1M1509 303h1M1514 299h1M1518 295h1M1523 291h1M1528 287h1M1533 282h1M1538 277h1M1544 272h1M1550 266h1M1557 260h1M1564 254h1M1571 248h1M1579 241h1M1587 233h1M1596 225h1M1605 217h1M1615 208h1M1626 199h1M1637 189h1M1648 179h1M1470 326h1M1472 323h1M1474 321h1M1476 318h1M1478 315h1M1480 312h1M1483 309h1M1485 306h1M1488 302h1M1491 299h1M1494 295h1M1497 291h1M1501 286h1M1504 281h1M1508 276h1M1512 271h1M1516 266h1M1521 260h1M1526 253h1M1531 247h1M1536 240h1M1542 232h1M1548 224h1M1555 216h1M1561 207h1M1569 198h1M1576 188h1M1584 177h1M1593 166h1M1602 154h1M1460 322h1M1462 320h1M1463 317h1M1464 314h1M1466 311h1M1467 308h1M1469 305h1M1471 301h1M1473 297h1M1475 293h1M1477 289h1M1479 284h1M1481 279h1M1484 274h1M1486 269h1M1489 263h1M1492 257h1M1495 251h1M1499 244h1M1502 237h1M1506 229h1M1510 221h1M1514 212h1M1518 203h1M1523 194h1M1528 184h1M1533 173h1M1539 161h1M1544 149h1M1551 136h1M1450 320h1M1451 318h1M1451 315h1M1452 312h1M1453 309h1M1454 305h1M1455 302h1M1455 298h1M1456 294h1M1457 290h1M1458 285h1M1460 280h1M1461 275h1M1462 270h1M1463 264h1M1465 258h1M1466 252h1M1468 245h1M1469 238h1M1471 231h1M1473 223h1M1475 214h1M1477 205h1M1479 196h1M1482 185h1M1484 175h1M1487 164h1M1490 152h1M1493 139h1M1496 125h1M1440 320h1M1440 317h1M1440 314h1M1440 311h1M1440 308h1M1440 304h1M1440 301h1M1440 297h1M1440 293h1M1440 288h1M1440 284h1M1440 279h1M1440 274h1M1440 268h1M1440 263h1M1440 257h1M1440 250h1M1440 243h1M1440 236h1M1440 228h1M1440 220h1M1440 212h1M1440 203h1M1440 193h1M1440 183h1M1440 172h1M1440 160h1M1440 148h1M1440 135h1M1440 122h1M1430 320h1M1429 318h1M1429 315h1M1428 312h1M1427 309h1M1426 305h1M1425 302h1M1425 298h1M1424 294h1M1423 290h1M1422 285h1M1420 280h1M1419 275h1M1418 270h1M1417 264h1M1415 258h1M1414 252h1M1412 245h1M1411 238h1M1409 231h1M1407 223h1M1405 214h1M1403 205h1M1401 196h1M1398 185h1M1396 175h1M1393 164h1M1390 152h1M1387 139h1M1384 125h1M1420 322h1M1418 320h1M1417 317h1M1416 314h1M1414 311h1M1413 308h1M1411 305h1M1409 301h1M1407 297h1M1405 293h1M1403 289h1M1401 284h1M1399 279h1M1396 274h1M1394 269h1M1391 263h1M1388 257h1M1385 251h1M1381 244h1M1378 237h1M1374 229h1M1370 221h1M1366 212h1M1362 203h1M1357 194h1M1352 184h1M1347 173h1M1341 161h1M1336 149h1M1329 136h1M1410 326h1M1408 323h1M1406 321h1M1404 318h1M1402 315h1M1400 312h1M1397 309h1M1395 306h1M1392 302h1M1389 299h1M1386 295h1M1383 291h1M1379 286h1M1376 281h1M1372 276h1M1368 271h1M1364 266h1M1359 260h1M1354 253h1M1349 247h1M1344 240h1M1338 232h1M1332 224h1M1325 216h1M1319 207h1M1311 198h1M1304 188h1M1296 177h1M1287 166h1M1278 154h1M1401 330h1M1399 328h1M1396 326h1M1394 324h1M1391 321h1M1388 319h1M1385 316h1M1382 313h1M1378 310h1M1374 306h1M1371 303h1M1366 299h1M1362 295h1M1357 291h1M1352 287h1M1347 282h1M1342 277h1M1336 272h1M1330 266h1M1323 260h1M1316 254h1M1309 248h1M1301 241h1M1293 233h1M1284 225h1M1275 217h1M1265 208h1M1254 199h1M1243 189h1M1232 179h1M1394 336h1M1391 334h1M1388 332h1M1385 330h1M1381 328h1M1378 326h1M1374 324h1M1370 321h1M1366 319h1M1362 316h1M1357 313h1M1352 310h1M1347 307h1M1341 303h1M1336 299h1M1329 296h1M1323 291h1M1316 287h1M1308 282h1M1300 277h1M1292 272h1M1283 267h1M1274 261h1M1264 255h1M1254 248h1M1243 241h1M1231 234h1M1219 226h1M1205 218h1M1192 209h1M1387 343h1M1384 341h1M1381 340h1M1377 338h1M1374 337h1M1370 335h1M1366 333h1M1361 331h1M1356 329h1M1351 327h1M1346 325h1M1341 322h1M1335 320h1M1328 317h1M1322 314h1M1315 311h1M1307 308h1M1299 304h1M1291 301h1M1282 297h1M1273 293h1M1263 289h1M1252 284h1M1241 279h1M1229 274h1M1217 269h1M1204 263h1M1190 257h1M1175 250h1M1159 244h1M1383 350h1M1380 349h1M1376 348h1M1372 347h1M1368 346h1M1364 345h1M1359 343h1M1354 342h1M1349 341h1M1344 339h1M1338 338h1M1332 336h1M1326 334h1M1319 332h1M1312 330h1M1304 328h1M1296 326h1M1287 324h1M1278 321h1M1269 319h1M1259 316h1M1248 313h1M1236 310h1M1224 306h1M1211 303h1M1198 299h1M1184 295h1M1168 291h1M1152 287h1M1135 282h1M1380 358h1M1377 357h1M1373 357h1M1369 356h1M1365 355h1M1360 355h1M1355 354h1M1350 354h1M1345 353h1M1339 352h1M1333 351h1M1327 350h1M1320 350h1M1313 349h1M1306 348h1M1298 347h1M1289 345h1M1280 344h1M1271 343h1M1261 342h1M1250 340h1M1239 339h1M1227 337h1M1214 336h1M1200 334h1M1186 332h1M1171 330h1M1155 328h1M1138 326h1M1120 323h1M1379 365h1M1376 365h1M1372 365h1M1368 365h1M1363 365h1M1359 365h1M1354 365h1M1349 365h1M1343 365h1M1338 365h1M1332 365h1M1325 365h1M1318 365h1M1311 365h1M1303 365h1M1295 365h1M1287 365h1M1278 365h1M1268 365h1M1258 365h1M1247 365h1M1235 365h1M1223 365h1M1210 365h1M1197 365h1M1182 365h1M1167 365h1M1151 365h1M1134 365h1M1115 365h1M1764 356h1M1764 347h1M1763 339h1M1761 331h1M1760 322h1M1757 314h1M1755 306h1M1752 297h1M1749 289h1M1745 281h1M1741 273h1M1736 265h1M1732 258h1M1726 250h1M1721 243h1M1715 235h1M1709 228h1M1702 221h1M1696 214h1M1688 208h1M1681 201h1M1673 195h1M1665 189h1M1657 183h1M1648 178h1M1640 172h1M1631 167h1M1621 162h1M1612 158h1M1602 153h1M1592 149h1M1582 145h1M1572 142h1M1561 138h1M1551 135h1M1540 133h1M1529 130h1M1518 128h1M1507 126h1M1496 124h1M1485 123h1M1473 122h1M1462 121h1M1451 121h1M1440 121h1M1428 121h1M1417 121h1M1406 122h1M1394 123h1M1383 124h1M1372 126h1M1361 128h1M1350 130h1M1339 133h1M1328 135h1M1318 138h1M1307 142h1M1297 145h1M1287 149h1M1277 153h1M1267 158h1M1258 162h1M1248 167h1M1239 172h1M1231 178h1M1222 183h1M1214 189h1M1206 195h1M1198 201h1M1191 208h1M1183 214h1M1177 221h1M1170 228h1M1164 235h1M1158 243h1M1153 250h1M1147 258h1M1143 265h1M1138 273h1M1134 281h1M1130 289h1M1127 297h1M1124 306h1M1122 314h1M1119 322h1M1118 331h1M1116 339h1M1115 347h1M1115 356h1M1622 360h1M1622 355h1M1621 350h1M1620 345h1M1619 341h1M1618 336h1M1617 331h1M1615 327h1M1613 322h1M1611 318h1M1609 313h1M1606 309h1M1604 304h1M1601 300h1M1598 296h1M1594 292h1M1591 288h1M1587 284h1M1584 280h1M1580 276h1M1575 273h1M1571 269h1M1566 266h1M1562 263h1M1557 259h1M1552 256h1M1547 254h1M1542 251h1M1536 248h1M1531 246h1M1525 243h1M1520 241h1M1514 239h1M1508 237h1M1502 236h1M1496 234h1M1490 233h1M1484 232h1M1477 230h1M1471 230h1M1465 229h1M1459 228h1M1452 228h1M1446 228h1M1440 227h1M1433 228h1M1427 228h1M1420 228h1M1414 229h1M1408 230h1M1402 230h1M1395 232h1M1389 233h1M1383 234h1M1377 236h1M1371 237h1M1365 239h1M1359 241h1M1354 243h1M1348 246h1M1343 248h1M1337 251h1M1332 254h1M1327 256h1M1322 259h1M1317 263h1M1313 266h1M1308 269h1M1304 273h1M1299 276h1M1295 280h1M1292 284h1M1288 288h1M1285 292h1M1281 296h1M1278 300h1M1275 304h1M1273 309h1M1270 313h1M1268 318h1M1266 322h1M1264 327h1M1262 331h1M1261 336h1M1260 341h1M1259 345h1M1258 350h1M1257 355h1M1257 360h1M1257 365h1M1542 362h1M1542 359h1M1542 356h1M1541 354h1M1541 351h1M1540 348h1M1539 346h1M1538 343h1M1537 341h1M1536 338h1M1535 336h1M1533 333h1M1532 331h1M1530 328h1M1529 326h1M1527 324h1M1525 321h1M1523 319h1M1520 317h1M1518 315h1M1516 313h1M1513 311h1M1511 309h1M1508 307h1M1506 305h1M1503 304h1M1500 302h1M1497 301h1M1494 299h1M1491 298h1M1488 296h1M1485 295h1M1481 294h1M1478 293h1M1475 292h1M1471 291h1M1468 290h1M1464 290h1M1461 289h1M1457 289h1M1454 288h1M1450 288h1M1447 288h1M1443 287h1M1440 287h1M1436 287h1M1432 288h1M1429 288h1M1425 288h1M1422 289h1M1418 289h1M1415 290h1M1411 290h1M1408 291h1M1404 292h1M1401 293h1M1398 294h1M1394 295h1M1391 296h1M1388 298h1M1385 299h1M1382 301h1M1379 302h1M1376 304h1M1373 305h1M1371 307h1M1368 309h1M1366 311h1M1363 313h1M1361 315h1M1359 317h1M1356 319h1M1354 321h1M1352 324h1M1350 326h1M1349 328h1M1347 331h1M1346 333h1M1344 336h1M1343 338h1M1342 341h1M1341 343h1M1340 346h1M1339 348h1M1338 351h1M1338 354h1M1337 356h1M1337 359h1M1337 362h1M1337 365h1M1497 365h1M1497 363h1M1497 361h1M1497 360h1M1497 358h1M1496 357h1M1496 355h1M1496 354h1M1495 353h1M1494 351h1M1494 350h1M1493 348h1M1492 347h1M1491 345h1M1491 344h1M1490 343h1M1489 342h1M1487 340h1M1486 339h1M1485 338h1M1484 337h1M1482 335h1M1481 334h1M1480 333h1M1478 332h1M1477 331h1M1475 330h1M1473 329h1M1472 329h1M1470 328h1M1468 327h1M1467 326h1M1465 326h1M1463 325h1M1461 324h1M1459 324h1M1457 323h1M1455 323h1M1453 322h1M1452 322h1M1450 322h1M1448 322h1M1446 321h1M1444 321h1M1442 321h1M1440 321h1M1437 321h1M1435 321h1M1433 321h1M1431 322h1M1429 322h1M1427 322h1M1426 322h1M1424 323h1M1422 323h1M1420 324h1M1418 324h1M1416 325h1M1414 326h1M1412 326h1M1411 327h1M1409 328h1M1407 329h1M1406 329h1M1404 330h1M1402 331h1M1401 332h1M1399 333h1M1398 334h1M1397 335h1M1395 337h1M1394 338h1M1393 339h1M1392 340h1M1390 342h1M1389 343h1M1388 344h1M1388 345h1M1387 347h1M1386 348h1M1385 350h1M1385 351h1M1384 353h1M1383 354h1M1383 355h1M1383 357h1M1382 358h1M1382 360h1M1382 361h1M1382 363h1M1382 365h1"/>
<path transform="translate(0,.5)" stroke="#f00" d="M1713 365h1M1713 357h1M1712 350h1M1711 343h1M1710 336h1M1709 329h1M1707 322h1M1705 315h1M1702 308h1M1700 301h1M1696 294h1M1693 288h1M1689 281h1M1685 275h1M1681 268h1M1676 262h1M1671 256h1M1666 250h1M1661 244h1M1655 238h1M1649 233h1M1643 227h1M1636 222h1M1629 217h1M1622 212h1M1615 207h1M1608 203h1M1600 199h1M1592 194h1M1584 191h1M1576 187h1M1568 183h1M1559 180h1M1551 177h1M1542 174h1M1533 172h1M1524 169h1M1515 167h1M1506 166h1M1496 164h1M1487 163h1M1478 161h1M1468 161h1M1459 160h1M1449 160h1M1440 159h1M1430 160h1M1420 160h1M1411 161h1M1401 161h1M1392 163h1M1383 164h1M1373 166h1M1364 167h1M1355 169h1M1346 172h1M1337 174h1M1328 177h1M1320 180h1M1311 183h1M1303 187h1M1295 191h1M1287 194h1M1279 199h1M1271 203h1M1264 207h1M1257 212h1M1250 217h1M1243 222h1M1236 227h1M1230 233h1M1224 238h1M1218 244h1M1213 250h1M1208 256h1M1203 262h1M1198 268h1M1194 275h1M1190 281h1M1186 288h1M1183 294h1M1179 301h1M1177 308h1M1174 315h1M1172 322h1M1170 329h1M1169 336h1M1168 343h1M1167 350h1M1166 357h1M1166 365h1"/>
</g>
<g font-family="Liberation Sans" font-size="25px" fill="#000" text-anchor="middle">
<text x="480" y="147">0</text>
<text x="479.5" y="185">-3</text>
<text x="479.5" y="253">-10</text>
<text x="479.5" y="313">-20</text>
<text x="479.5" y="347">-30</text>
<text x="1440" y="147">0</text>
<text x="1439.5" y="185">-3</text>
<text x="1439.5" y="253">-10</text>
<text x="1439.5" y="313">-20</text>
<text x="1439.5" y="347">-30</text>
<text x="480.5" y="114">X</text><text x="145" y="374">Y</text>
<text x="1440.5" y="114">Z</text><text x="1774.8" y="374">X</text>
<text x="1115" y="398" text-anchor="start" fill="#808080" letter-spacing=".1">4.79(dBi) = 0dB</text>
</g>
<g shape-rendering="crispEdges" fill="none" stroke-width="1">
<ellipse cx="480" cy="365" rx="32.5" ry="24.5" stroke="#808080"/><ellipse cx="480" cy="365" rx="18.5" ry="13.5" stroke="#808080"/>
<path d="M1407.5 365A32.5 24.5 0 0 1 1472.5 365M1421.5 365A18.5 13.5 0 0 1 1458.5 365" stroke="#000"/>
<path transform="translate(0,.5)" stroke="#ff00ff" d="M463 185h36M450 186h13M499 186h13M441 187h9M512 187h9M434 188h7M521 188h7M427 189h7M528 189h6M422 190h5M534 190h6M417 191h5M540 191h5M412 192h5M545 192h5M408 193h4M550 193h4M404 194h4M554 194h4M400 195h4M558 195h4M396 196h4M562 196h4M393 197h3M566 197h3M389 198h4M569 198h3M386 199h3M572 199h4M383 200h3M576 200h3M380 201h3M579 201h3M377 202h3M582 202h3M374 203h3M585 203h2M372 204h2M587 204h3M369 205h3M590 205h3M367 206h2M593 206h2M364 207h3M595 207h3M362 208h2M598 208h2M360 209h2M600 209h2M357 210h3M602 210h3M355 211h2M605 211h2M353 212h2M607 212h2M351 213h2M609 213h2M349 214h2M611 214h2M347 215h2M613 215h2M345 216h2M615 216h2M343 217h2M617 217h2M341 218h2M619 218h2M339 219h2M621 219h2M337 220h2M623 220h2M335 221h2M625 221h1M334 222h1M626 222h2M332 223h2M628 223h2M330 224h2M630 224h2M329 225h1M632 225h1M327 226h2M633 226h2M325 227h2M635 227h1M324 228h1M636 228h2M322 229h2M638 229h2M321 230h1M640 230h1M319 231h2M641 231h2M318 232h1M643 232h1M316 233h2M644 233h2M315 234h1M646 234h1M314 235h1M647 235h1M312 236h2M648 236h2M311 237h1M650 237h1M310 238h1M651 238h1M308 239h2M652 239h2M307 240h1M654 240h1M306 241h1M655 241h1M304 242h2M656 242h2M303 243h1M658 243h1M302 244h1M659 244h1M301 245h1M660 245h1M300 246h1M661 246h1M298 247h2M662 247h1M297 248h1M663 248h1M296 249h1M664 249h1M295 250h1M665 250h1M294 251h1M666 251h1M293 252h1M667 252h1M292 253h1M668 253h1M291 254h1M669 254h1M290 255h1M670 255h1M289 256h1M671 256h1M288 257h1M672 257h1M287 258h1M673 258h1M286 259h1M674 259h1M285 260h1M675 260h1M284 261h1M676 261h1M283 262h1M677 262h1M282 263h1M678 263h1M281 264h1M679 264h1M280 265h1M680 265h1M279 266h1M681 266h1M278 267h1M682 267h1M277 268h1M683 268h1M276 269h1M684 269h1M275 270h1M684 270h1M274 271h1M685 271h1M273 272h1M686 272h1M272 273h1M687 273h1M272 274h1M688 274h1M271 275h1M688 275h1M270 276h1M689 276h1M269 277h1M690 277h1M269 278h1M691 278h1M268 279h1M691 279h1M267 280h1M692 280h1M267 281h1M693 281h1M266 282h1M694 282h1M265 283h1M694 283h1M265 284h1M695 284h1M264 285h1M696 285h1M263 286h1M696 286h1M263 287h1M697 287h1M262 288h1M698 288h1M261 289h1M698 289h1M261 290h1M699 290h1M260 291h1M699 291h1M259 292h1M700 292h1M259 293h1M701 293h1M258 294h1M701 294h1M258 295h1M702 295h1M257 296h1M702 296h1M257 297h1M703 297h1M256 298h1M703 298h1M256 299h1M704 299h1M255 300h1M705 300h1M255 301h1M705 301h1M254 302h1M706 302h1M254 303h1M706 303h1M253 304h1M707 304h1M253 305h1M707 305h1M252 306h1M707 306h1M252 307h1M708 307h1M251 308h1M708 308h1M251 309h1M709 309h1M250 310h1M709 310h1M250 311h1M710 311h1M250 312h1M710 312h1M249 313h1M711 313h1M249 314h1M711 314h1M248 315h1M711 315h1M248 316h1M712 316h1M248 317h1M712 317h1M247 318h1M712 318h1M247 319h1M713 319h1M246 320h1M713 320h1M246 321h1M714 321h1M246 322h1M714 322h1M246 323h1M714 323h1M245 324h1M715 324h1M245 325h1M715 325h1M245 326h1M715 326h1M244 327h1M715 327h1M244 328h1M716 328h1M244 329h1M716 329h1M244 330h1M716 330h1M243 331h1M717 331h1M243 332h1M717 332h1M243 333h1M717 333h1M242 334h1M717 334h1M242 335h1M718 335h1M242 336h1M718 336h1M242 337h1M718 337h1M242 338h1M718 338h1M241 339h1M718 339h1M241 340h1M719 340h1M241 341h1M719 341h1M241 342h1M719 342h1M241 343h1M719 343h1M241 344h1M719 344h1M240 345h1M719 345h1M240 346h1M720 346h1M240 347h1M720 347h1M240 348h1M720 348h1M240 349h1M720 349h1M240 350h1M720 350h1M240 351h1M720 351h1M240 352h1M720 352h1M239 353h1M720 353h1M239 354h1M721 354h1M239 355h1M721 355h1M239 356h1M721 356h1M239 357h1M721 357h1M239 358h1M721 358h1M239 359h1M721 359h1M239 360h1M721 360h1M239 361h1M721 361h1M239 362h1M721 362h1M239 363h1M721 363h1M239 364h1M721 364h1M239 365h1M721 365h1M239 366h1M721 366h1M239 367h1M721 367h1M239 368h1M721 368h1M239 369h1M721 369h1M239 370h1M721 370h1M239 371h1M721 371h1M239 372h1M721 372h1M239 373h1M721 373h1M239 374h1M721 374h1M239 375h1M721 375h1M239 376h1M721 376h1M240 377h1M721 377h1M240 378h1M720 378h1M240 379h1M720 379h1M240 380h1M720 380h1M240 381h1M720 381h1M240 382h1M720 382h1M240 383h1M720 383h1M240 384h1M720 384h1M241 385h1M720 385h1M241 386h1M719 386h1M241 387h1M719 387h1M241 388h1M719 388h1M241 389h1M719 389h1M241 390h1M719 390h1M242 391h1M719 391h1M242 392h1M718 392h1M242 393h1M718 393h1M242 394h1M718 394h1M242 395h1M718 395h1M243 396h1M718 396h1M243 397h1M717 397h1M243 398h1M717 398h1M243 399h1M717 399h1M244 400h1M716 400h1M244 401h1M716 401h1M244 402h1M716 402h1M245 403h1M716 403h1M245 404h1M715 404h1M245 405h1M715 405h1M245 406h1M715 406h1M246 407h1M714 407h1M246 408h1M714 408h1M246 409h1M714 409h1M247 410h1M714 410h1M247 411h1M713 411h1M248 412h1M713 412h1M248 413h1M712 413h1M248 414h1M712 414h1M249 415h1M712 415h1M249 416h1M711 416h1M249 417h1M711 417h1M250 418h1M710 418h1M250 419h1M710 419h1M251 420h1M710 420h1M251 421h1M709 421h1M252 422h1M709 422h1M252 423h1M708 423h1M253 424h1M708 424h1M253 425h1M707 425h1M253 426h1M707 426h1M254 427h1M706 427h1M254 428h1M706 428h1M255 429h1M705 429h1M255 430h1M705 430h1M256 431h1M704 431h1M257 432h1M704 432h1M257 433h1M703 433h1M258 434h1M703 434h1M258 435h1M702 435h1M259 436h1M702 436h1M259 437h1M701 437h1M260 438h1M701 438h1M261 439h1M700 439h1M261 440h1M699 440h1M262 441h1M699 441h1M262 442h1M698 442h1M263 443h1M697 443h1M264 444h1M697 444h1M264 445h1M696 445h1M265 446h1M695 446h1M266 447h1M695 447h1M266 448h1M694 448h1M267 449h1M693 449h1M268 450h1M693 450h1M269 451h1M692 451h1M269 452h1M691 452h1M270 453h1M691 453h1M271 454h1M690 454h1M272 455h1M689 455h1M272 456h1M688 456h1M273 457h1M688 457h1M274 458h1M687 458h1M275 459h1M686 459h1M276 460h1M685 460h1M276 461h1M684 461h1M277 462h1M683 462h1M278 463h1M682 463h1M279 464h1M681 464h1M280 465h1M680 465h1M281 466h1M679 466h1M282 467h1M678 467h1M283 468h1M677 468h1M284 469h1M676 469h1M285 470h1M675 470h1M286 471h1M674 471h1M287 472h1M673 472h1M288 473h1M672 473h1M289 474h1M671 474h1M290 475h1M670 475h1M291 476h1M669 476h1M292 477h1M668 477h1M293 478h1M667 478h1M294 479h1M666 479h1M295 480h1M665 480h1M296 481h1M664 481h1M297 482h1M663 482h1M298 483h1M661 483h2M299 484h1M660 484h1M300 485h1M659 485h1M301 486h1M658 486h1M302 487h1M657 487h1M303 488h2M655 488h2M305 489h1M654 489h1M306 490h1M653 490h1M307 491h2M651 491h2M309 492h1M650 492h1M310 493h1M649 493h1M311 494h2M647 494h2M313 495h1M646 495h1M314 496h1M645 496h1M315 497h2M643 497h2M317 498h1M642 498h1M318 499h2M640 499h2M320 500h1M639 500h1M321 501h2M637 501h2M323 502h2M636 502h1M325 503h1M634 503h2M326 504h2M632 504h2M328 505h1M631 505h1M329 506h2M629 506h2M331 507h2M627 507h2M333 508h2M626 508h1M335 509h1M624 509h2M336 510h2M622 510h2M338 511h2M620 511h2M340 512h2M618 512h2M342 513h2M616 513h2M344 514h2M614 514h2M346 515h2M612 515h2M348 516h2M610 516h2M350 517h2M608 517h2M352 518h2M606 518h2M354 519h2M604 519h2M356 520h3M601 520h3M359 521h2M599 521h2M361 522h2M597 522h2M363 523h3M594 523h3M366 524h2M592 524h2M368 525h3M589 525h3M371 526h3M587 526h2M374 527h2M584 527h3M376 528h3M581 528h3M379 529h3M578 529h3M382 530h3M575 530h3M385 531h4M572 531h3M389 532h3M568 532h4M392 533h3M565 533h3M395 534h4M561 534h4M399 535h4M557 535h4M403 536h4M553 536h4M407 537h4M549 537h4M411 538h5M544 538h5M416 539h5M539 539h5M421 540h6M534 540h5M427 541h6M527 541h7M433 542h7M520 542h7M440 543h9M511 543h9M449 544h13M498 544h13M462 545h36"/>
<path transform="translate(0,.5)" stroke="#800000" d="M461 122h40M446 123h15M501 123h14M436 124h10M515 124h10M428 125h8M525 125h9M421 126h7M534 126h7M415 127h6M541 127h6M409 128h6M547 128h6M404 129h5M553 129h5M399 130h5M558 130h5M395 131h4M563 131h4M390 132h5M567 132h5M386 133h4M572 133h4M382 134h4M576 134h4M378 135h4M580 135h3M375 136h3M583 136h4M371 137h4M587 137h4M368 138h3M591 138h3M365 139h3M594 139h3M361 140h4M597 140h3M359 141h2M600 141h3M356 142h3M603 142h3M353 143h3M606 143h3M350 144h3M609 144h3M347 145h3M612 145h3M344 146h3M615 146h2M342 147h2M617 147h3M339 148h3M620 148h3M337 149h2M623 149h2M334 150h3M625 150h2M332 151h2M627 151h3M330 152h2M630 152h2M327 153h3M632 153h2M325 154h2M634 154h3M323 155h2M637 155h2M321 156h2M639 156h2M319 157h2M641 157h2M317 158h2M643 158h2M314 159h3M645 159h2M312 160h2M647 160h2M310 161h2M649 161h2M309 162h1M651 162h2M307 163h2M653 163h2M305 164h2M655 164h2M303 165h2M657 165h2M301 166h2M659 166h2M299 167h2M661 167h2M297 168h2M663 168h2M296 169h1M665 169h1M294 170h2M666 170h2M292 171h2M668 171h2M290 172h2M670 172h1M289 173h1M671 173h2M287 174h2M673 174h2M286 175h1M675 175h1M284 176h2M676 176h2M282 177h2M678 177h1M281 178h1M679 178h2M279 179h2M681 179h1M278 180h1M682 180h2M276 181h2M684 181h1M275 182h1M685 182h2M274 183h1M687 183h1M272 184h2M688 184h2M271 185h1M690 185h1M269 186h2M691 186h2M268 187h1M693 187h1M267 188h1M694 188h1M265 189h2M695 189h2M264 190h1M697 190h1M262 191h2M698 191h1M261 192h1M699 192h2M260 193h1M701 193h1M259 194h1M702 194h1M257 195h2M703 195h2M256 196h1M705 196h1M255 197h1M706 197h1M254 198h1M707 198h1M253 199h1M708 199h1M251 200h2M709 200h2M250 201h1M711 201h1M249 202h1M712 202h1M248 203h1M713 203h1M247 204h1M714 204h1M246 205h1M715 205h1M244 206h2M716 206h1M243 207h1M717 207h1M242 208h1M718 208h1M241 209h1M719 209h1M240 210h1M720 210h1M239 211h1M721 211h1M238 212h1M722 212h1M237 213h1M723 213h1M236 214h1M724 214h1M235 215h1M725 215h1M234 216h1M726 216h1M233 217h1M727 217h1M232 218h1M728 218h1M231 219h1M729 219h1M230 220h1M730 220h1M229 221h1M731 221h1M228 222h1M732 222h1M227 223h1M733 223h1M226 224h1M734 224h1M225 225h1M735 225h1M224 226h1M736 226h1M223 227h1M736 227h1M222 228h1M737 228h1M221 229h1M738 229h1M220 230h1M739 230h1M219 231h1M740 231h1M219 232h1M741 232h1M218 233h1M742 233h1M217 234h1M742 234h1M216 235h1M743 235h1M215 236h1M744 236h1M214 237h1M745 237h1M214 238h1M746 238h1M213 239h1M746 239h1M212 240h1M747 240h1M211 241h1M748 241h1M211 242h1M749 242h1M210 243h1M749 243h1M209 244h1M750 244h1M208 245h1M751 245h1M208 246h1M752 246h1M207 247h1M752 247h1M206 248h1M753 248h1M206 249h1M754 249h1M205 250h1M755 250h1M204 251h1M755 251h1M204 252h1M756 252h1M203 253h1M757 253h1M202 254h1M757 254h1M202 255h1M758 255h1M201 256h1M759 256h1M200 257h1M759 257h1M200 258h1M760 258h1M199 259h1M761 259h1M198 260h1M761 260h1M198 261h1M762 261h1M197 262h1M762 262h1M197 263h1M763 263h1M196 264h1M764 264h1M195 265h1M764 265h1M195 266h1M765 266h1M194 267h1M765 267h1M194 268h1M766 268h1M193 269h1M766 269h1M193 270h1M767 270h1M192 271h1M767 271h1M192 272h1M768 272h1M191 273h1M769 273h1M191 274h1M769 274h1M190 275h1M770 275h1M189 276h1M770 276h1M189 277h1M771 277h1M188 278h1M771 278h1M188 279h1M772 279h1M187 280h1M772 280h1M187 281h1M773 281h1M187 282h1M773 282h1M186 283h1M774 283h1M186 284h1M774 284h1M185 285h1M774 285h1M185 286h1M775 286h1M184 287h1M775 287h1M184 288h1M776 288h1M183 289h1M776 289h1M183 290h1M777 290h1M183 291h1M777 291h1M182 292h1M777 292h1M182 293h1M778 293h1M181 294h1M778 294h1M181 295h1M779 295h1M181 296h1M779 296h1M180 297h1M779 297h1M180 298h1M780 298h1M180 299h1M780 299h1M179 300h1M780 300h1M179 301h1M781 301h1M179 302h1M781 302h1M178 303h1M782 303h1M178 304h1M782 304h1M178 305h1M782 305h1M177 306h1M783 306h1M177 307h1M783 307h1M177 308h1M783 308h1M176 309h1M783 309h1M176 310h1M784 310h1M176 311h1M784 311h1M175 312h1M784 312h1M175 313h1M785 313h1M175 314h1M785 314h1M175 315h1M785 315h1M174 316h1M785 316h1M174 317h1M786 317h1M174 318h1M786 318h1M174 319h1M786 319h1M173 320h1M786 320h1M173 321h1M787 321h1M173 322h1M787 322h1M173 323h1M787 323h1M172 324h1M787 324h1M172 325h1M788 325h1M172 326h1M788 326h1M172 327h1M788 327h1M172 328h1M788 328h1M171 329h1M788 329h1M171 330h1M789 330h1M171 331h1M789 331h1M171 332h1M789 332h1M171 333h1M789 333h1M170 334h1M789 334h1M170 335h1M790 335h1M170 336h1M790 336h1M170 337h1M790 337h1M170 338h1M790 338h1M170 339h1M790 339h1M170 340h1M790 340h1M169 341h1M790 341h1M169 342h1M791 342h1M169 343h1M791 343h1M169 344h1M791 344h1M169 345h1M791 345h1M169 346h1M791 346h1M169 347h1M791 347h1M169 348h1M791 348h1M169 349h1M791 349h1M169 350h1M791 350h1M168 351h1M791 351h1M168 352h1M792 352h1M168 353h1M792 353h1M168 354h1M792 354h1M168 355h1M792 355h1M168 356h1M792 356h1M168 357h1M792 357h1M168 358h1M792 358h1M168 359h1M792 359h1M168 360h1M792 360h1M168 361h1M792 361h1M168 362h1M792 362h1M168 363h1M792 363h1M168 364h1M792 364h1M168 365h1M792 365h1M168 366h1M792 366h1M168 367h1M792 367h1M168 368h1M792 368h1M168 369h1M792 369h1M168 370h1M792 370h1M168 371h1M792 371h1M168 372h1M792 372h1M168 373h1M792 373h1M168 374h1M792 374h1M168 375h1M792 375h1M168 376h1M792 376h1M168 377h1M792 377h1M168 378h1M792 378h1M169 379h1M792 379h1M169 380h1M791 380h1M169 381h1M791 381h1M169 382h1M791 382h1M169 383h1M791 383h1M169 384h1M791 384h1M169 385h1M791 385h1M169 386h1M791 386h1M169 387h1M791 387h1M169 388h1M791 388h1M170 389h1M791 389h1M170 390h1M790 390h1M170 391h1M790 391h1M170 392h1M790 392h1M170 393h1M790 393h1M170 394h1M790 394h1M170 395h1M790 395h1M171 396h1M790 396h1M171 397h1M789 397h1M171 398h1M789 398h1M171 399h1M789 399h1M171 400h1M789 400h1M172 401h1M789 401h1M172 402h1M788 402h1M172 403h1M788 403h1M172 404h1M788 404h1M172 405h1M788 405h1M173 406h1M788 406h1M173 407h1M787 407h1M173 408h1M787 408h1M173 409h1M787 409h1M174 410h1M787 410h1M174 411h1M786 411h1M174 412h1M786 412h1M174 413h1M786 413h1M175 414h1M786 414h1M175 415h1M785 415h1M175 416h1M785 416h1M175 417h1M785 417h1M176 418h1M785 418h1M176 419h1M784 419h1M176 420h1M784 420h1M177 421h1M784 421h1M177 422h1M783 422h1M177 423h1M783 423h1M177 424h1M783 424h1M178 425h1M782 425h1M178 426h1M782 426h1M178 427h1M782 427h1M179 428h1M781 428h1M179 429h1M781 429h1M180 430h1M781 430h1M180 431h1M780 431h1M180 432h1M780 432h1M181 433h1M780 433h1M181 434h1M779 434h1M181 435h1M779 435h1M182 436h1M779 436h1M182 437h1M778 437h1M183 438h1M778 438h1M183 439h1M777 439h1M183 440h1M777 440h1M184 441h1M777 441h1M184 442h1M776 442h1M185 443h1M776 443h1M185 444h1M775 444h1M186 445h1M775 445h1M186 446h1M774 446h1M186 447h1M774 447h1M187 448h1M773 448h1M187 449h1M773 449h1M188 450h1M773 450h1M188 451h1M772 451h1M189 452h1M772 452h1M189 453h1M771 453h1M190 454h1M771 454h1M190 455h1M770 455h1M191 456h1M769 456h1M191 457h1M769 457h1M192 458h1M768 458h1M193 459h1M768 459h1M193 460h1M767 460h1M194 461h1M767 461h1M194 462h1M766 462h1M195 463h1M766 463h1M195 464h1M765 464h1M196 465h1M765 465h1M196 466h1M764 466h1M197 467h1M763 467h1M198 468h1M763 468h1M198 469h1M762 469h1M199 470h1M762 470h1M199 471h1M761 471h1M200 472h1M760 472h1M201 473h1M760 473h1M201 474h1M759 474h1M202 475h1M758 475h1M203 476h1M758 476h1M203 477h1M757 477h1M204 478h1M756 478h1M205 479h1M756 479h1M205 480h1M755 480h1M206 481h1M754 481h1M207 482h1M754 482h1M208 483h1M753 483h1M208 484h1M752 484h1M209 485h1M752 485h1M210 486h1M751 486h1M211 487h1M750 487h1M211 488h1M749 488h1M212 489h1M749 489h1M213 490h1M748 490h1M214 491h1M747 491h1M214 492h1M746 492h1M215 493h1M746 493h1M216 494h1M745 494h1M217 495h1M744 495h1M218 496h1M743 496h1M218 497h1M742 497h1M219 498h1M741 498h1M220 499h1M741 499h1M221 500h1M740 500h1M222 501h1M739 501h1M223 502h1M738 502h1M224 503h1M737 503h1M224 504h1M736 504h1M225 505h1M735 505h1M226 506h1M734 506h1M227 507h1M733 507h1M228 508h1M732 508h1M229 509h1M731 509h1M230 510h1M730 510h1M231 511h1M729 511h1M232 512h1M728 512h1M233 513h1M727 513h1M234 514h1M726 514h1M235 515h1M725 515h1M236 516h1M724 516h1M237 517h1M723 517h1M238 518h1M722 518h1M239 519h1M721 519h1M240 520h1M720 520h1M241 521h1M719 521h1M242 522h1M718 522h1M243 523h1M717 523h1M244 524h1M715 524h2M245 525h1M714 525h1M246 526h1M713 526h1M247 527h1M712 527h1M248 528h1M711 528h1M249 529h1M710 529h1M250 530h2M708 530h2M252 531h1M707 531h1M253 532h1M706 532h1M254 533h1M705 533h1M255 534h1M704 534h1M256 535h2M702 535h2M258 536h1M701 536h1M259 537h1M700 537h1M260 538h2M699 538h1M262 539h1M697 539h2M263 540h1M696 540h1M264 541h2M694 541h2M266 542h1M693 542h1M267 543h1M692 543h1M268 544h2M690 544h2M270 545h1M689 545h1M271 546h2M687 546h2M273 547h1M686 547h1M274 548h2M685 548h1M276 549h1M683 549h2M277 550h2M682 550h1M279 551h1M680 551h2M280 552h2M679 552h1M282 553h1M677 553h2M283 554h2M675 554h2M285 555h1M674 555h1M286 556h2M672 556h2M288 557h2M671 557h1M290 558h1M669 558h2M291 559h2M667 559h2M293 560h2M665 560h2M295 561h1M664 561h1M296 562h2M662 562h2M298 563h2M660 563h2M300 564h2M658 564h2M302 565h2M656 565h2M304 566h2M654 566h2M306 567h2M652 567h2M308 568h2M651 568h1M310 569h2M649 569h2M312 570h2M647 570h2M314 571h2M644 571h3M316 572h2M642 572h2M318 573h2M640 573h2M320 574h2M638 574h2M322 575h2M636 575h2M324 576h3M634 576h2M327 577h2M631 577h3M329 578h2M629 578h2M331 579h3M627 579h2M334 580h2M624 580h3M336 581h2M622 581h2M338 582h3M619 582h3M341 583h3M617 583h2M344 584h2M614 584h3M346 585h3M611 585h3M349 586h3M608 586h3M352 587h3M605 587h3M355 588h3M602 588h3M358 589h3M600 589h2M361 590h3M596 590h4M364 591h3M593 591h3M367 592h3M590 592h3M370 593h4M586 593h4M374 594h4M583 594h3M378 595h3M579 595h4M381 596h4M575 596h4M385 597h4M571 597h4M389 598h5M566 598h5M394 599h4M562 599h4M398 600h5M557 600h5M403 601h5M552 601h5M408 602h6M546 602h6M414 603h6M540 603h6M420 604h7M533 604h7M427 605h9M525 605h8M436 606h10M515 606h10M446 607h14M500 607h15M460 608h40"/>
<path transform="translate(0,.5)" stroke="#008000" d="M467 151h52M453 152h14M519 152h8M445 153h8M527 153h7M439 154h6M534 154h5M433 155h6M539 155h6M428 156h5M545 156h5M423 157h5M550 157h5M419 158h4M555 158h5M415 159h4M560 159h4M411 160h4M564 160h5M407 161h4M569 161h4M404 162h3M573 162h4M400 163h4M577 163h3M397 164h3M580 164h4M394 165h3M584 165h3M391 166h3M587 166h3M388 167h3M590 167h2M385 168h3M592 168h3M382 169h3M595 169h3M379 170h3M598 170h2M377 171h2M600 171h2M374 172h3M602 172h2M372 173h2M604 173h3M369 174h3M607 174h2M367 175h2M609 175h2M365 176h2M611 176h1M363 177h2M612 177h2M361 178h2M614 178h2M359 179h2M616 179h2M356 180h3M618 180h2M354 181h2M620 181h2M353 182h1M622 182h1M351 183h2M623 183h2M349 184h2M625 184h2M347 185h2M627 185h1M345 186h2M628 186h2M344 187h1M630 187h1M342 188h2M631 188h2M340 189h2M633 189h1M339 190h1M634 190h2M337 191h2M636 191h2M336 192h1M638 192h1M334 193h2M639 193h1M332 194h2M640 194h2M331 195h1M642 195h1M330 196h1M643 196h2M328 197h2M645 197h1M327 198h1M646 198h1M326 199h1M647 199h2M324 200h2M649 200h1M323 201h1M650 201h1M321 202h2M651 202h2M320 203h1M653 203h1M319 204h1M654 204h1M318 205h1M655 205h1M316 206h2M656 206h1M315 207h1M657 207h1M314 208h1M658 208h1M313 209h1M659 209h2M312 210h1M661 210h1M311 211h1M662 211h1M310 212h1M663 212h1M309 213h1M664 213h1M308 214h1M665 214h1M307 215h1M666 215h1M306 216h1M667 216h1M305 217h1M668 217h1M304 218h1M669 218h1M303 219h1M669 219h1M302 220h1M670 220h1M301 221h1M671 221h1M300 222h1M672 222h1M299 223h1M673 223h1M299 224h1M673 224h1M298 225h1M674 225h1M297 226h1M675 226h1M296 227h1M675 227h1M295 228h1M676 228h1M295 229h1M677 229h1M294 230h1M677 230h1M293 231h1M678 231h1M293 232h1M679 232h1M292 233h1M679 233h1M291 234h1M680 234h1M291 235h1M681 235h1M290 236h1M681 236h1M290 237h1M682 237h1M289 238h1M682 238h1M289 239h1M683 239h1M288 240h1M683 240h1M288 241h1M684 241h1M287 242h1M685 242h1M287 243h1M685 243h1M286 244h1M686 244h1M286 245h1M686 245h1M285 246h1M687 246h1M285 247h1M687 247h1M284 248h1M688 248h1M284 249h1M688 249h1M283 250h1M688 250h1M283 251h1M689 251h1M283 252h1M689 252h1M282 253h1M690 253h1M282 254h1M690 254h1M281 255h1M690 255h1M281 256h1M691 256h1M281 257h1M691 257h1M280 258h1M692 258h1M280 259h1M692 259h1M280 260h1M692 260h1M279 261h1M692 261h1M279 262h1M693 262h1M278 263h1M693 263h1M278 264h1M693 264h1M278 265h1M694 265h1M277 266h1M694 266h1M277 267h1M694 267h1M277 268h1M694 268h1M276 269h1M695 269h1M276 270h1M695 270h1M276 271h1M695 271h1M275 272h1M695 272h1M275 273h1M695 273h1M275 274h1M696 274h1M275 275h1M696 275h1M274 276h1M696 276h1M274 277h1M696 277h1M274 278h1M696 278h1M273 279h1M696 279h1M273 280h1M697 280h1M273 281h1M697 281h1M273 282h1M697 282h1M272 283h1M697 283h1M272 284h1M697 284h1M272 285h1M697 285h1M272 286h1M697 286h1M272 287h1M697 287h1M272 288h1M697 288h1M272 289h1M697 289h1M271 290h1M697 290h1M271 291h1M698 291h1M271 292h1M698 292h1M271 293h1M698 293h1M271 294h1M698 294h1M271 295h1M698 295h1M271 296h1M698 296h1M271 297h1M698 297h1M271 298h1M698 298h1M271 299h1M698 299h1M271 300h1M698 300h1M271 301h1M698 301h1M271 302h1M698 302h1M271 303h1M698 303h1M271 304h1M698 304h1M271 305h1M698 305h1M271 306h1M698 306h1M271 307h1M698 307h1M271 308h1M698 308h1M271 309h1M698 309h1M271 310h1M698 310h1M271 311h1M698 311h1M271 312h1M698 312h1M271 313h1M698 313h1M271 314h1M698 314h1M271 315h1M697 315h1M271 316h1M697 316h1M271 317h1M697 317h1M271 318h1M697 318h1M271 319h1M697 319h1M271 320h1M697 320h1M271 321h1M697 321h1M271 322h1M697 322h1M271 323h1M697 323h1M271 324h1M697 324h1M271 325h1M697 325h1M271 326h1M697 326h1M271 327h1M697 327h1M271 328h1M697 328h1M271 329h1M697 329h1M271 330h1M697 330h1M271 331h1M697 331h1M271 332h1M697 332h1M271 333h1M697 333h1M271 334h1M697 334h1M271 335h1M697 335h1M272 336h1M697 336h1M272 337h1M697 337h1M272 338h1M697 338h1M272 339h1M696 339h1M272 340h1M696 340h1M272 341h1M696 341h1M272 342h1M696 342h1M272 343h1M696 343h1M272 344h1M696 344h1M272 345h1M696 345h1M272 346h1M696 346h1M272 347h1M696 347h1M272 348h1M696 348h1M273 349h1M696 349h1M273 350h1M696 350h1M273 351h1M696 351h1M273 352h1M696 352h1M273 353h1M696 353h1M273 354h1M696 354h1M273 355h1M696 355h1M273 356h1M696 356h1M274 357h1M696 357h1M274 358h1M696 358h1M274 359h1M696 359h1M274 360h1M696 360h1M274 361h1M696 361h1M274 362h1M696 362h1M274 363h1M696 363h1M274 364h1M696 364h1M274 365h1M696 365h1M274 366h1M696 366h1M274 367h1M696 367h1M274 368h1M696 368h1M274 369h1M696 369h1M274 370h1M696 370h1M274 371h1M696 371h1M274 372h1M696 372h1M274 373h1M696 373h1M274 374h1M696 374h1M273 375h1M696 375h1M273 376h1M696 376h1M273 377h1M696 377h1M273 378h1M696 378h1M273 379h1M696 379h1M273 380h1M696 380h1M273 381h1M696 381h1M273 382h1M696 382h1M272 383h1M696 383h1M272 384h1M696 384h1M272 385h1M696 385h1M272 386h1M696 386h1M272 387h1M696 387h1M272 388h1M696 388h1M272 389h1M696 389h1M272 390h1M696 390h1M272 391h1M697 391h1M272 392h1M697 392h1M272 393h1M697 393h1M272 394h1M697 394h1M272 395h1M697 395h1M271 396h1M697 396h1M271 397h1M697 397h1M271 398h1M697 398h1M271 399h1M697 399h1M271 400h1M697 400h1M271 401h1M697 401h1M271 402h1M697 402h1M271 403h1M697 403h1M271 404h1M697 404h1M271 405h1M697 405h1M271 406h1M697 406h1M271 407h1M697 407h1M271 408h1M697 408h1M271 409h1M697 409h1M271 410h1M697 410h1M271 411h1M697 411h1M271 412h1M697 412h1M271 413h1M697 413h1M271 414h1M697 414h1M271 415h1M698 415h1M271 416h1M698 416h1M271 417h1M698 417h1M271 418h1M698 418h1M271 419h1M698 419h1M271 420h1M698 420h1M271 421h1M698 421h1M271 422h1M698 422h1M271 423h1M698 423h1M271 424h1M698 424h1M271 425h1M698 425h1M271 426h1M698 426h1M271 427h1M698 427h1M271 428h1M698 428h1M271 429h1M698 429h1M271 430h1M698 430h1M271 431h1M698 431h1M271 432h1M698 432h1M271 433h1M698 433h1M271 434h1M698 434h1M271 435h1M698 435h1M271 436h1M698 436h1M271 437h1M698 437h1M271 438h1M698 438h1M271 439h1M697 439h1M271 440h1M697 440h1M271 441h1M697 441h1M272 442h1M697 442h1M272 443h1M697 443h1M272 444h1M697 444h1M272 445h1M697 445h1M272 446h1M697 446h1M272 447h1M697 447h1M273 448h1M697 448h1M273 449h1M697 449h1M273 450h1M696 450h1M273 451h1M696 451h1M273 452h1M696 452h1M274 453h1M696 453h1M274 454h1M696 454h1M274 455h1M696 455h1M275 456h1M695 456h1M275 457h1M695 457h1M275 458h1M695 458h1M275 459h1M695 459h1M276 460h1M695 460h1M276 461h1M694 461h1M276 462h1M694 462h1M277 463h1M694 463h1M277 464h1M694 464h1M277 465h1M693 465h1M278 466h1M693 466h1M278 467h1M693 467h1M279 468h1M693 468h1M279 469h1M692 469h1M279 470h1M692 470h1M280 471h1M692 471h1M280 472h1M691 472h1M280 473h1M691 473h1M281 474h1M690 474h1M281 475h1M690 475h1M281 476h1M690 476h1M282 477h1M689 477h1M282 478h1M689 478h1M283 479h1M688 479h1M283 480h1M688 480h1M283 481h1M688 481h1M284 482h1M687 482h1M284 483h1M687 483h1M285 484h1M686 484h1M285 485h1M686 485h1M286 486h1M685 486h1M286 487h1M685 487h1M287 488h1M684 488h1M287 489h1M684 489h1M288 490h1M683 490h1M288 491h1M682 491h1M289 492h1M682 492h1M289 493h1M681 493h1M290 494h1M681 494h1M290 495h1M680 495h1M291 496h1M680 496h1M292 497h1M679 497h1M292 498h1M678 498h1M293 499h1M678 499h1M294 500h1M677 500h1M294 501h1M676 501h1M295 502h1M676 502h1M296 503h1M675 503h1M296 504h1M674 504h1M297 505h1M673 505h1M298 506h1M673 506h1M299 507h1M672 507h1M300 508h1M671 508h1M301 509h1M670 509h1M302 510h1M670 510h1M303 511h1M669 511h1M304 512h1M668 512h1M305 513h1M667 513h1M306 514h1M666 514h1M307 515h1M665 515h1M308 516h1M664 516h1M309 517h1M663 517h1M310 518h1M663 518h1M311 519h2M662 519h1M313 520h1M661 520h1M314 521h1M660 521h1M315 522h1M659 522h1M316 523h1M658 523h1M317 524h1M657 524h1M318 525h2M656 525h1M320 526h1M655 526h1M321 527h1M653 527h2M322 528h2M652 528h1M324 529h1M651 529h1M325 530h1M650 530h1M326 531h2M648 531h2M328 532h1M647 532h1M329 533h2M646 533h1M331 534h1M644 534h2M332 535h1M643 535h1M333 536h2M641 536h2M335 537h1M640 537h1M336 538h2M638 538h2M338 539h2M637 539h1M340 540h1M635 540h2M341 541h2M634 541h1M343 542h1M632 542h2M344 543h2M631 543h1M346 544h2M629 544h2M348 545h2M627 545h2M350 546h1M626 546h1M351 547h2M624 547h2M353 548h2M622 548h2M355 549h2M621 549h1M357 550h2M619 550h2M359 551h2M617 551h2M361 552h2M615 552h2M363 553h3M613 553h2M366 554h2M611 554h2M368 555h2M609 555h2M370 556h3M607 556h2M373 557h2M605 557h2M375 558h3M603 558h2M378 559h2M601 559h2M380 560h3M598 560h3M383 561h3M596 561h2M386 562h3M593 562h3M389 563h3M591 563h2M392 564h3M588 564h3M395 565h3M584 565h4M398 566h3M581 566h3M401 567h3M578 567h3M404 568h4M574 568h4M408 569h4M570 569h4M412 570h3M565 570h5M415 571h5M561 571h4M420 572h4M556 572h5M424 573h5M551 573h5M429 574h5M545 574h6M434 575h5M540 575h5M439 576h7M535 576h5M446 577h8M528 577h7M454 578h14M520 578h8M468 579h52"/>
<path transform="translate(0,.5)" stroke="#ff00ff" d="M1308 251h20M1554 251h20M1296 252h12M1328 252h11M1543 252h11M1574 252h12M1289 253h7M1339 253h7M1536 253h7M1586 253h7M1283 254h6M1346 254h5M1531 254h5M1593 254h5M1279 255h4M1351 255h5M1526 255h5M1598 255h5M1274 256h5M1356 256h4M1522 256h4M1603 256h4M1270 257h4M1360 257h3M1519 257h3M1607 257h4M1267 258h3M1363 258h3M1515 258h4M1611 258h4M1264 259h3M1366 259h4M1512 259h3M1615 259h3M1261 260h3M1370 260h2M1510 260h2M1618 260h3M1258 261h3M1372 261h3M1507 261h3M1621 261h2M1256 262h2M1375 262h2M1504 262h3M1623 262h3M1254 263h2M1377 263h3M1502 263h2M1626 263h2M1252 264h2M1380 264h2M1500 264h2M1628 264h2M1250 265h2M1382 265h2M1498 265h2M1630 265h2M1248 266h2M1384 266h2M1496 266h2M1632 266h2M1246 267h2M1386 267h2M1494 267h2M1634 267h2M1245 268h1M1388 268h2M1492 268h2M1636 268h1M1243 269h2M1390 269h2M1490 269h2M1637 269h2M1241 270h2M1392 270h1M1488 270h2M1639 270h1M1240 271h1M1393 271h2M1487 271h1M1640 271h2M1239 272h1M1395 272h2M1485 272h2M1642 272h1M1237 273h2M1397 273h1M1484 273h1M1643 273h1M1236 274h1M1398 274h2M1482 274h2M1644 274h1M1235 275h1M1400 275h1M1480 275h2M1645 275h1M1234 276h1M1401 276h2M1479 276h1M1646 276h1M1233 277h1M1403 277h1M1478 277h1M1647 277h1M1232 278h1M1404 278h2M1476 278h2M1648 278h1M1231 279h1M1406 279h1M1475 279h1M1649 279h1M1230 280h1M1407 280h1M1474 280h1M1650 280h1M1229 281h1M1408 281h1M1472 281h2M1651 281h1M1228 282h1M1409 282h1M1471 282h1M1652 282h1M1227 283h1M1410 283h1M1470 283h1M1653 283h1M1226 284h1M1411 284h1M1469 284h1M1654 284h1M1225 285h1M1412 285h1M1468 285h1M1654 285h1M1224 286h1M1413 286h1M1467 286h1M1655 286h1M1224 287h1M1414 287h1M1466 287h1M1656 287h1M1223 288h1M1415 288h1M1465 288h1M1657 288h1M1222 289h1M1416 289h1M1464 289h1M1657 289h1M1222 290h1M1417 290h1M1463 290h1M1658 290h1M1221 291h1M1418 291h1M1462 291h1M1658 291h1M1221 292h1M1419 292h1M1461 292h1M1659 292h1M1220 293h1M1420 293h1M1460 293h1M1660 293h1M1220 294h1M1421 294h1M1459 294h1M1660 294h1M1219 295h1M1422 295h1M1458 295h1M1661 295h1M1219 296h1M1423 296h1M1457 296h1M1661 296h1M1218 297h1M1424 297h1M1456 297h1M1661 297h1M1218 298h1M1425 298h1M1455 298h1M1662 298h1M1217 299h1M1425 299h1M1454 299h1M1662 299h1M1217 300h1M1426 300h1M1453 300h1M1663 300h1M1217 301h1M1427 301h1M1452 301h1M1663 301h1M1217 302h1M1428 302h1M1452 302h1M1663 302h1M1216 303h1M1428 303h1M1451 303h1M1663 303h1M1216 304h1M1429 304h1M1451 304h1M1664 304h1M1216 305h1M1430 305h1M1450 305h1M1664 305h1M1216 306h1M1430 306h1M1449 306h1M1664 306h1M1216 307h1M1431 307h1M1449 307h1M1664 307h1M1216 308h1M1431 308h1M1448 308h1M1664 308h1M1216 309h1M1432 309h1M1448 309h1M1664 309h1M1216 310h1M1432 310h1M1447 310h1M1664 310h1M1216 311h1M1433 311h1M1447 311h1M1664 311h1M1216 312h1M1433 312h1M1446 312h1M1664 312h1M1216 313h1M1434 313h1M1446 313h1M1664 313h1M1216 314h1M1434 314h1M1445 314h1M1664 314h1M1216 315h1M1435 315h1M1445 315h1M1664 315h1M1216 316h1M1435 316h1M1445 316h1M1664 316h1M1217 317h1M1435 317h1M1444 317h1M1664 317h1M1217 318h1M1436 318h1M1444 318h1M1663 318h1M1217 319h1M1436 319h1M1444 319h1M1663 319h1M1218 320h1M1436 320h1M1443 320h1M1663 320h1M1218 321h1M1437 321h1M1443 321h1M1662 321h1M1219 322h1M1437 322h1M1443 322h1M1662 322h1M1219 323h1M1437 323h1M1442 323h1M1661 323h1M1220 324h1M1438 324h1M1442 324h1M1661 324h1M1220 325h1M1438 325h1M1442 325h1M1660 325h1M1221 326h1M1438 326h1M1442 326h1M1660 326h1M1222 327h1M1438 327h1M1442 327h1M1659 327h1M1222 328h1M1438 328h1M1441 328h1M1658 328h1M1223 329h1M1439 329h1M1441 329h1M1657 329h1M1224 330h1M1439 330h1M1441 330h1M1656 330h1M1225 331h1M1439 331h1M1441 331h1M1655 331h1M1226 332h1M1439 332h1M1441 332h1M1654 332h1M1227 333h1M1439 333h1M1441 333h1M1653 333h1M1228 334h1M1439 334h1M1441 334h1M1652 334h1M1229 335h1M1439 335h1M1441 335h1M1651 335h1M1230 336h1M1439 336h2M1650 336h1M1231 337h1M1440 337h1M1649 337h1M1232 338h1M1440 338h1M1647 338h2M1233 339h1M1440 339h1M1646 339h1M1234 340h2M1440 340h1M1644 340h2M1236 341h1M1440 341h1M1643 341h1M1237 342h2M1440 342h1M1641 342h2M1239 343h2M1440 343h1M1639 343h2M1241 344h2M1440 344h1M1637 344h2M1243 345h2M1440 345h1M1635 345h2M1245 346h3M1440 346h1M1632 346h3M1248 347h2M1440 347h1M1630 347h2M1250 348h3M1440 348h1M1627 348h3M1253 349h3M1440 349h1M1624 349h3M1256 350h3M1440 350h1M1621 350h3M1259 351h4M1440 351h1M1617 351h4M1263 352h4M1440 352h1M1613 352h4M1267 353h5M1440 353h1M1608 353h5M1272 354h5M1440 354h1M1603 354h5M1277 355h7M1440 355h1M1597 355h6M1284 356h7M1440 356h1M1589 356h8M1291 357h8M1440 357h1M1581 357h8M1299 358h9M1440 358h1M1572 358h9M1308 359h8M1440 359h1M1564 359h8M1316 360h8M1440 360h1M1557 360h7M1324 361h5M1440 361h1M1551 361h6M1329 362h3M1440 362h1M1548 362h3M1332 363h4M1440 363h1M1544 363h4M1336 364h22M1440 364h1M1523 364h21M1358 365h165"/>
<path transform="translate(0,.5)" stroke="#800000" d="M1425 122h32M1408 123h17M1457 123h17M1396 124h12M1474 124h12M1387 125h9M1486 125h9M1379 126h8M1495 126h8M1372 127h7M1503 127h7M1366 128h6M1510 128h6M1360 129h6M1516 129h5M1355 130h5M1521 130h6M1350 131h5M1527 131h4M1346 132h4M1531 132h5M1342 133h4M1536 133h4M1338 134h4M1540 134h4M1334 135h4M1544 135h4M1330 136h4M1548 136h4M1327 137h3M1552 137h3M1323 138h4M1555 138h4M1320 139h3M1559 139h3M1317 140h3M1562 140h3M1314 141h3M1565 141h3M1311 142h3M1568 142h3M1308 143h3M1571 143h3M1305 144h3M1574 144h2M1303 145h2M1576 145h3M1300 146h3M1579 146h3M1298 147h2M1582 147h2M1295 148h3M1584 148h3M1293 149h2M1587 149h2M1290 150h3M1589 150h3M1288 151h2M1592 151h2M1286 152h2M1594 152h2M1284 153h2M1596 153h2M1281 154h3M1598 154h2M1279 155h2M1600 155h2M1277 156h2M1602 156h3M1275 157h2M1605 157h2M1273 158h2M1607 158h2M1271 159h2M1609 159h2M1269 160h2M1611 160h1M1268 161h1M1612 161h2M1266 162h2M1614 162h2M1264 163h2M1616 163h2M1262 164h2M1618 164h2M1260 165h2M1620 165h2M1259 166h1M1622 166h1M1257 167h2M1623 167h2M1255 168h2M1625 168h1M1254 169h1M1626 169h2M1252 170h2M1628 170h2M1251 171h1M1630 171h1M1249 172h2M1631 172h2M1248 173h1M1633 173h1M1246 174h2M1634 174h2M1245 175h1M1636 175h1M1243 176h2M1637 176h2M1242 177h1M1639 177h1M1241 178h1M1640 178h1M1239 179h2M1641 179h2M1238 180h1M1643 180h1M1237 181h1M1644 181h1M1236 182h1M1645 182h1M1234 183h2M1646 183h1M1233 184h1M1647 184h2M1232 185h1M1649 185h1M1231 186h1M1650 186h1M1230 187h1M1651 187h1M1229 188h1M1652 188h1M1228 189h1M1653 189h1M1227 190h1M1654 190h1M1225 191h2M1655 191h1M1224 192h1M1656 192h1M1223 193h1M1657 193h1M1222 194h1M1658 194h1M1221 195h1M1659 195h1M1220 196h1M1659 196h1M1219 197h1M1660 197h1M1218 198h1M1661 198h1M1217 199h1M1662 199h1M1216 200h1M1663 200h1M1215 201h1M1664 201h1M1215 202h1M1665 202h1M1214 203h1M1666 203h1M1213 204h1M1666 204h1M1212 205h1M1667 205h1M1211 206h1M1668 206h1M1211 207h1M1669 207h1M1210 208h1M1669 208h1M1209 209h1M1670 209h1M1209 210h1M1671 210h1M1208 211h1M1671 211h1M1207 212h1M1672 212h1M1207 213h1M1673 213h1M1206 214h1M1673 214h1M1206 215h1M1674 215h1M1205 216h1M1674 216h1M1204 217h1M1675 217h1M1204 218h1M1676 218h1M1203 219h1M1676 219h1M1203 220h1M1677 220h1M1202 221h1M1677 221h1M1202 222h1M1678 222h1M1202 223h1M1678 223h1M1201 224h1M1679 224h1M1201 225h1M1679 225h1M1200 226h1M1679 226h1M1200 227h1M1680 227h1M1199 228h1M1680 228h1M1199 229h1M1681 229h1M1199 230h1M1681 230h1M1198 231h1M1681 231h1M1198 232h1M1682 232h1M1198 233h1M1682 233h1M1197 234h1M1682 234h1M1197 235h1M1683 235h1M1197 236h1M1683 236h1M1197 237h1M1683 237h1M1196 238h1M1683 238h1M1196 239h1M1684 239h1M1196 240h1M1684 240h1M1196 241h1M1684 241h1M1195 242h1M1684 242h1M1195 243h1M1685 243h1M1195 244h1M1685 244h1M1195 245h1M1685 245h1M1195 246h1M1685 246h1M1195 247h1M1685 247h1M1194 248h1M1685 248h1M1194 249h1M1686 249h1M1194 250h1M1686 250h1M1194 251h1M1686 251h1M1194 252h1M1686 252h1M1194 253h1M1686 253h1M1194 254h1M1686 254h1M1194 255h1M1686 255h1M1194 256h1M1686 256h1M1194 257h1M1686 257h1M1194 258h1M1686 258h1M1194 259h1M1686 259h1M1194 260h1M1686 260h1M1194 261h1M1686 261h1M1194 262h1M1686 262h1M1194 263h1M1686 263h1M1194 264h1M1686 264h1M1194 265h1M1686 265h1M1194 266h1M1686 266h1M1194 267h1M1686 267h1M1194 268h1M1686 268h1M1195 269h1M1686 269h1M1195 270h1M1685 270h1M1195 271h1M1685 271h1M1195 272h1M1685 272h1M1195 273h1M1685 273h1M1195 274h1M1685 274h1M1196 275h1M1685 275h1M1196 276h1M1684 276h1M1196 277h1M1684 277h1M1196 278h1M1684 278h1M1197 279h1M1684 279h1M1197 280h1M1683 280h1M1197 281h1M1683 281h1M1198 282h1M1683 282h1M1198 283h1M1682 283h1M1198 284h1M1682 284h1M1199 285h1M1682 285h1M1199 286h1M1681 286h1M1200 287h1M1681 287h1M1200 288h1M1680 288h1M1200 289h1M1680 289h1M1201 290h1M1680 290h1M1201 291h1M1679 291h1M1202 292h1M1679 292h1M1202 293h1M1678 293h1M1203 294h1M1678 294h1M1203 295h1M1677 295h1M1204 296h1M1677 296h1M1205 297h1M1676 297h1M1205 298h1M1675 298h1M1206 299h1M1675 299h1M1206 300h1M1674 300h1M1207 301h1M1673 301h1M1208 302h1M1673 302h1M1208 303h1M1672 303h1M1209 304h1M1671 304h1M1210 305h1M1671 305h1M1211 306h1M1670 306h1M1212 307h1M1669 307h1M1212 308h1M1668 308h1M1213 309h1M1667 309h1M1214 310h1M1666 310h1M1215 311h1M1665 311h1M1216 312h1M1664 312h1M1217 313h1M1663 313h1M1218 314h1M1662 314h1M1219 315h1M1661 315h1M1220 316h1M1660 316h1M1221 317h1M1659 317h1M1222 318h1M1658 318h1M1223 319h1M1657 319h1M1224 320h1M1656 320h1M1225 321h1M1654 321h2M1226 322h1M1653 322h1M1227 323h1M1652 323h1M1228 324h2M1651 324h1M1230 325h1M1649 325h2M1231 326h1M1648 326h1M1232 327h2M1646 327h2M1234 328h1M1645 328h1M1235 329h2M1643 329h2M1237 330h2M1642 330h1M1239 331h1M1640 331h2M1240 332h2M1638 332h2M1242 333h2M1637 333h1M1244 334h1M1635 334h2M1245 335h2M1633 335h2M1247 336h2M1631 336h2M1249 337h2M1629 337h2M1251 338h3M1627 338h2M1254 339h2M1624 339h3M1256 340h2M1622 340h2M1258 341h2M1620 341h2M1260 342h3M1617 342h3M1263 343h2M1615 343h2M1265 344h3M1612 344h3M1268 345h3M1609 345h3M1271 346h3M1606 346h3M1274 347h3M1603 347h3M1277 348h3M1600 348h3M1280 349h4M1596 349h4M1284 350h3M1593 350h3M1287 351h4M1589 351h4M1291 352h4M1585 352h4M1295 353h4M1581 353h4M1299 354h4M1577 354h4M1303 355h5M1572 355h5M1308 356h5M1567 356h5M1313 357h5M1562 357h5M1318 358h6M1557 358h5M1324 359h5M1551 359h6M1329 360h4M1547 360h4M1333 361h4M1544 361h3M1337 362h6M1538 362h6M1343 363h9M1529 363h9M1352 364h13M1515 364h14M1365 365h150"/>
<path transform="translate(0,.5)" stroke="#008000" d="M1280 233h28M1574 233h27M1270 234h10M1308 234h9M1565 234h9M1601 234h11M1262 235h8M1317 235h6M1559 235h6M1612 235h8M1256 236h6M1323 236h6M1553 236h6M1620 236h6M1250 237h6M1329 237h5M1548 237h5M1626 237h6M1246 238h4M1334 238h5M1543 238h5M1632 238h4M1241 239h5M1339 239h4M1539 239h4M1636 239h5M1237 240h4M1343 240h4M1534 240h5M1641 240h3M1234 241h3M1347 241h4M1531 241h3M1644 241h4M1231 242h3M1351 242h4M1527 242h4M1648 242h3M1228 243h3M1355 243h3M1524 243h3M1651 243h3M1225 244h3M1358 244h3M1520 244h4M1654 244h3M1222 245h3M1361 245h3M1518 245h2M1657 245h3M1219 246h3M1364 246h3M1515 246h3M1660 246h2M1217 247h2M1367 247h3M1512 247h3M1662 247h3M1215 248h2M1370 248h3M1509 248h3M1665 248h2M1213 249h2M1373 249h2M1507 249h2M1667 249h2M1211 250h2M1375 250h3M1504 250h3M1669 250h2M1209 251h2M1378 251h2M1502 251h2M1671 251h2M1207 252h2M1380 252h2M1500 252h2M1673 252h2M1205 253h2M1382 253h2M1498 253h2M1675 253h2M1203 254h2M1384 254h2M1496 254h2M1677 254h2M1202 255h1M1386 255h2M1494 255h2M1679 255h1M1200 256h2M1388 256h2M1492 256h2M1680 256h2M1199 257h1M1390 257h2M1490 257h2M1682 257h1M1197 258h2M1392 258h2M1488 258h2M1683 258h2M1196 259h1M1394 259h1M1486 259h2M1685 259h1M1194 260h2M1395 260h2M1485 260h1M1686 260h1M1193 261h1M1397 261h2M1483 261h2M1687 261h1M1192 262h1M1399 262h1M1481 262h2M1688 262h1M1191 263h1M1400 263h2M1480 263h1M1689 263h1M1190 264h1M1402 264h1M1479 264h1M1690 264h1M1189 265h1M1403 265h2M1477 265h2M1691 265h1M1188 266h1M1405 266h1M1476 266h1M1692 266h1M1187 267h1M1406 267h2M1474 267h2M1693 267h1M1186 268h1M1408 268h1M1473 268h1M1694 268h1M1185 269h1M1409 269h1M1472 269h1M1695 269h1M1184 270h1M1410 270h2M1470 270h2M1696 270h1M1183 271h1M1412 271h1M1469 271h1M1697 271h1M1182 272h1M1413 272h1M1468 272h1M1698 272h1M1181 273h1M1414 273h2M1466 273h2M1698 273h1M1180 274h1M1416 274h1M1465 274h1M1699 274h1M1180 275h1M1417 275h1M1464 275h1M1700 275h1M1179 276h1M1418 276h1M1463 276h1M1700 276h1M1178 277h1M1419 277h1M1462 277h1M1701 277h1M1178 278h1M1420 278h1M1460 278h2M1702 278h1M1177 279h1M1421 279h2M1459 279h1M1702 279h1M1177 280h1M1423 280h1M1458 280h1M1703 280h1M1176 281h1M1424 281h1M1457 281h1M1703 281h1M1176 282h1M1425 282h1M1456 282h1M1704 282h1M1176 283h1M1426 283h1M1455 283h1M1704 283h1M1175 284h1M1427 284h1M1454 284h1M1705 284h1M1175 285h1M1428 285h1M1452 285h2M1705 285h1M1175 286h1M1429 286h2M1451 286h1M1705 286h1M1174 287h1M1431 287h1M1450 287h1M1706 287h1M1174 288h1M1432 288h1M1449 288h1M1706 288h1M1174 289h1M1433 289h1M1448 289h1M1706 289h1M1173 290h1M1434 290h1M1447 290h1M1706 290h1M1173 291h1M1435 291h1M1446 291h1M1707 291h1M1173 292h1M1436 292h1M1445 292h1M1707 292h1M1173 293h1M1437 293h1M1444 293h1M1707 293h1M1173 294h1M1438 294h1M1443 294h1M1707 294h1M1173 295h1M1439 295h1M1442 295h1M1707 295h1M1173 296h1M1440 296h2M1707 296h1M1173 297h1M1707 297h1M1173 298h1M1707 298h1M1173 299h1M1707 299h1M1173 300h1M1707 300h1M1173 301h1M1707 301h1M1173 302h1M1707 302h1M1173 303h1M1707 303h1M1173 304h1M1707 304h1M1173 305h1M1707 305h1M1174 306h1M1707 306h1M1174 307h1M1706 307h1M1174 308h1M1706 308h1M1174 309h1M1706 309h1M1175 310h1M1706 310h1M1175 311h1M1705 311h1M1176 312h1M1705 312h1M1176 313h1M1704 313h1M1176 314h1M1704 314h1M1177 315h1M1704 315h1M1177 316h1M1703 316h1M1178 317h1M1702 317h1M1179 318h1M1702 318h1M1179 319h1M1701 319h1M1180 320h1M1701 320h1M1181 321h1M1700 321h1M1181 322h1M1699 322h1M1182 323h1M1698 323h1M1183 324h1M1697 324h1M1184 325h1M1696 325h1M1185 326h1M1695 326h1M1186 327h1M1694 327h1M1187 328h1M1693 328h1M1188 329h1M1692 329h1M1189 330h1M1691 330h1M1190 331h1M1689 331h2M1191 332h1M1688 332h1M1192 333h2M1686 333h2M1194 334h1M1685 334h1M1195 335h2M1683 335h2M1197 336h1M1682 336h1M1198 337h2M1680 337h2M1200 338h2M1678 338h2M1202 339h2M1676 339h2M1204 340h2M1674 340h2M1206 341h2M1672 341h2M1208 342h3M1669 342h3M1211 343h2M1667 343h2M1213 344h3M1664 344h3M1216 345h3M1661 345h3M1219 346h3M1658 346h3M1222 347h3M1655 347h3M1225 348h3M1652 348h3M1228 349h4M1648 349h4M1232 350h4M1644 350h4M1236 351h4M1640 351h4M1240 352h5M1636 352h4M1245 353h4M1631 353h5M1249 354h5M1626 354h5M1254 355h5M1621 355h5M1259 356h6M1615 356h6M1265 357h6M1609 357h6M1271 358h6M1603 358h6M1277 359h7M1596 359h7M1284 360h8M1588 360h8M1292 361h9M1579 361h9M1301 362h12M1567 362h12M1313 363h11M1556 363h11M1324 364h22M1535 364h21M1346 365h189"/>
<path transform="translate(0,.5)" stroke="#800000" d="M1375 365h15M1491 365h15"/>
<path transform="translate(0,.5)" stroke="#ff00ff" d="M1390 365h9M1482 365h9"/>
</g></svg>
<div class="abs" style="left:0;top:724px;width:1930px;height:295px;background:#fff;border:1px solid;border-color:#808080 #fff #fff #808080"></div>
<div class="abs" style="left:1px;top:725px;width:1928px;height:293px;border:1px solid;border-color:#404040 #d4d0c8 #d4d0c8 #404040"></div>
<div class="hd" style="left:2px;top:726px;width:98px;height:46px"><span>No.</span></div>
<div class="vl" style="left:100px;top:726px;height:47px;background:#000"></div>
<div class="hd" style="left:101px;top:726px;width:155px;height:46px"><span>F (МГц)</span></div>
<div class="vl" style="left:256px;top:726px;height:47px;background:#000"></div>
<div class="hd" style="left:257px;top:726px;width:150px;height:46px"><span>R</span></div>
<div class="vl" style="left:407px;top:726px;height:47px;background:#000"></div>
<div class="hd" style="left:408px;top:726px;width:150px;height:46px"><span>jX</span></div>
<div class="vl" style="left:558px;top:726px;height:47px;background:#000"></div>
<div class="hd" style="left:559px;top:726px;width:123px;height:46px"><span>КСВ</span></div>
<div class="vl" style="left:682px;top:726px;height:47px;background:#000"></div>
<div class="hd" style="left:683px;top:726px;width:120px;height:46px"><span>Gh</span></div>
<div class="vl" style="left:803px;top:726px;height:47px;background:#000"></div>
<div class="hd" style="left:804px;top:726px;width:120px;height:46px"><span>Ga</span></div>
<div class="vl" style="left:924px;top:726px;height:47px;background:#000"></div>
<div class="hd" style="left:925px;top:726px;width:120px;height:46px"><span>F/B</span></div>
<div class="vl" style="left:1045px;top:726px;height:47px;background:#000"></div>
<div class="hd" style="left:1046px;top:726px;width:115px;height:46px"><span>Елев.</span></div>
<div class="vl" style="left:1161px;top:726px;height:47px;background:#000"></div>
<div class="hd" style="left:1162px;top:726px;width:155px;height:46px"><span>Земля</span></div>
<div class="vl" style="left:1317px;top:726px;height:47px;background:#000"></div>
<div class="hd" style="left:1318px;top:726px;width:143px;height:46px"><span>Высота</span></div>
<div class="vl" style="left:1461px;top:726px;height:47px;background:#000"></div>
<div class="hd" style="left:1462px;top:726px;width:125px;height:46px"><span>Поляр.</span></div>
<div class="vl" style="left:1587px;top:726px;height:47px;background:#000"></div>
<div class="hd" style="left:1588px;top:726px;width:180px;height:46px"><span>File</span></div>
<div class="vl" style="left:1768px;top:726px;height:47px;background:#000"></div>
<div class="hd" style="left:1769px;top:726px;width:181px;height:46px"><span>Имя</span></div>
<div class="vl" style="left:1950px;top:726px;height:47px;background:#000"></div>
<div class="hl" style="left:2px;top:772px;width:1918px;background:#000"></div>
<div class="hd m" style="left:2px;top:773px;width:98px;height:46px"><span>1</span></div>
<div class="vl" style="left:100px;top:773px;height:47px;background:#000"></div>
<div class="hl" style="left:2px;top:819px;width:99px;background:#000"></div>
<div class="cell m" style="left:101px;top:773px;width:155px;height:46px"><span style="left:4px;top:2px">14.15</span></div>
<div class="vl" style="left:256px;top:773px;height:47px;background:#c0c0c0"></div>
<div class="cell m" style="left:257px;top:773px;width:150px;height:46px"><span style="left:4px;top:2px">29.748</span></div>
<div class="vl" style="left:407px;top:773px;height:47px;background:#c0c0c0"></div>
<div class="cell m" style="left:408px;top:773px;width:150px;height:46px"><span style="left:4px;top:2px">-47.441</span></div>
<div class="vl" style="left:558px;top:773px;height:47px;background:#c0c0c0"></div>
<div class="cell m" style="left:559px;top:773px;width:123px;height:46px"><span style="left:4px;top:2px">3.5</span></div>
<div class="vl" style="left:682px;top:773px;height:47px;background:#c0c0c0"></div>
<div class="cell m" style="left:683px;top:773px;width:120px;height:46px"><span style="left:4px;top:2px">---</span></div>
<div class="vl" style="left:803px;top:773px;height:47px;background:#c0c0c0"></div>
<div class="cell m" style="left:804px;top:773px;width:120px;height:46px"><span style="left:4px;top:2px">-0.38</span></div>
<div class="vl" style="left:924px;top:773px;height:47px;background:#c0c0c0"></div>
<div class="cell m" style="left:925px;top:773px;width:120px;height:46px"><span style="left:4px;top:2px">-0.0</span></div>
<div class="vl" style="left:1045px;top:773px;height:47px;background:#c0c0c0"></div>
<div class="cell m" style="left:1046px;top:773px;width:115px;height:46px"><span style="left:4px;top:2px">24.4</span></div>
<div class="vl" style="left:1161px;top:773px;height:47px;background:#c0c0c0"></div>
<div class="cell m" style="left:1162px;top:773px;width:155px;height:46px"><span style="left:4px;top:2px">Реал.</span></div>
<div class="vl" style="left:1317px;top:773px;height:47px;background:#c0c0c0"></div>
<div class="cell m" style="left:1318px;top:773px;width:143px;height:46px"><span style="left:4px;top:2px">1.0</span></div>
<div class="vl" style="left:1461px;top:773px;height:47px;background:#c0c0c0"></div>
<div class="cell m" style="left:1462px;top:773px;width:125px;height:46px"><span style="left:4px;top:2px">Верт.</span></div>
<div class="vl" style="left:1587px;top:773px;height:47px;background:#c0c0c0"></div>
<div class="cell m" style="left:1588px;top:773px;width:180px;height:46px"><span style="left:4px;top:2px">Текущ.</span></div>
<div class="vl" style="left:1768px;top:773px;height:47px;background:#c0c0c0"></div>
<div class="cell m" style="left:1769px;top:773px;width:181px;height:46px"><span style="left:4px;top:2px">gp</span></div>
<div class="vl" style="left:1950px;top:773px;height:47px;background:#c0c0c0"></div>
<div class="hl" style="left:101px;top:819px;width:1819px;background:#c0c0c0"></div>
<div class="hd r" style="left:2px;top:820px;width:98px;height:46px"><span>2</span></div>
<div class="vl" style="left:100px;top:820px;height:47px;background:#000"></div>
<div class="hl" style="left:2px;top:866px;width:99px;background:#000"></div>
<div class="cell r" style="left:101px;top:820px;width:155px;height:46px"><span style="left:4px;top:2px">14.15</span></div>
<div class="vl" style="left:256px;top:820px;height:47px;background:#c0c0c0"></div>
<div class="cell r" style="left:257px;top:820px;width:150px;height:46px"><span style="left:4px;top:2px">50.477</span></div>
<div class="vl" style="left:407px;top:820px;height:47px;background:#c0c0c0"></div>
<div class="cell r" style="left:408px;top:820px;width:150px;height:46px"><span style="left:4px;top:2px">-16.28</span></div>
<div class="vl" style="left:558px;top:820px;height:47px;background:#c0c0c0"></div>
<div class="cell r" style="left:559px;top:820px;width:123px;height:46px"><span style="left:4px;top:2px">1.38</span></div>
<div class="vl" style="left:682px;top:820px;height:47px;background:#c0c0c0"></div>
<div class="cell r" style="left:683px;top:820px;width:120px;height:46px"><span style="left:4px;top:2px">---</span></div>
<div class="vl" style="left:803px;top:820px;height:47px;background:#c0c0c0"></div>
<div class="cell r" style="left:804px;top:820px;width:120px;height:46px"><span style="left:4px;top:2px">4.79</span></div>
<div class="vl" style="left:924px;top:820px;height:47px;background:#c0c0c0"></div>
<div class="cell r" style="left:925px;top:820px;width:120px;height:46px"><span style="left:4px;top:2px">0.0</span></div>
<div class="vl" style="left:1045px;top:820px;height:47px;background:#c0c0c0"></div>
<div class="cell r" style="left:1046px;top:820px;width:115px;height:46px"><span style="left:4px;top:2px">71.0</span></div>
<div class="vl" style="left:1161px;top:820px;height:47px;background:#c0c0c0"></div>
<div class="cell r" style="left:1162px;top:820px;width:155px;height:46px"><span style="left:4px;top:2px">Реал.</span></div>
<div class="vl" style="left:1317px;top:820px;height:47px;background:#c0c0c0"></div>
<div class="cell r" style="left:1318px;top:820px;width:143px;height:46px"><span style="left:4px;top:2px">1.0</span></div>
<div class="vl" style="left:1461px;top:820px;height:47px;background:#c0c0c0"></div>
<div class="cell r" style="left:1462px;top:820px;width:125px;height:46px"><span style="left:4px;top:2px">Гор.</span></div>
<div class="vl" style="left:1587px;top:820px;height:47px;background:#c0c0c0"></div>
<div class="cell r" style="left:1588px;top:820px;width:180px;height:46px"><span style="left:4px;top:2px">D:\Прочее\Работа</span></div>
<div class="vl" style="left:1768px;top:820px;height:47px;background:#c0c0c0"></div>
<div class="cell r" style="left:1769px;top:820px;width:181px;height:46px"><span style="left:4px;top:2px">IV</span></div>
<div class="vl" style="left:1950px;top:820px;height:47px;background:#c0c0c0"></div>
<div class="hl" style="left:101px;top:866px;width:1819px;background:#c0c0c0"></div>
<div class="hd g" style="left:2px;top:867px;width:98px;height:46px"><span>3</span></div>
<div class="vl" style="left:100px;top:867px;height:47px;background:#000"></div>
<div class="hl" style="left:2px;top:913px;width:99px;background:#000"></div>
<div class="cell g" style="left:101px;top:867px;width:155px;height:46px"><span style="left:4px;top:2px">14.15</span></div>
<div class="vl" style="left:256px;top:867px;height:47px;background:#c0c0c0"></div>
<div class="cell g" style="left:257px;top:867px;width:150px;height:46px"><span style="left:4px;top:2px">58.616</span></div>
<div class="vl" style="left:407px;top:867px;height:47px;background:#c0c0c0"></div>
<div class="cell g" style="left:408px;top:867px;width:150px;height:46px"><span style="left:4px;top:2px">-44.194</span></div>
<div class="vl" style="left:558px;top:867px;height:47px;background:#c0c0c0"></div>
<div class="cell g" style="left:559px;top:867px;width:123px;height:46px"><span style="left:4px;top:2px">2.25</span></div>
<div class="vl" style="left:682px;top:867px;height:47px;background:#c0c0c0"></div>
<div class="cell g" style="left:683px;top:867px;width:120px;height:46px"><span style="left:4px;top:2px">---</span></div>
<div class="vl" style="left:803px;top:867px;height:47px;background:#c0c0c0"></div>
<div class="cell g" style="left:804px;top:867px;width:120px;height:46px"><span style="left:4px;top:2px">2.7</span></div>
<div class="vl" style="left:924px;top:867px;height:47px;background:#c0c0c0"></div>
<div class="cell g" style="left:925px;top:867px;width:120px;height:46px"><span style="left:4px;top:2px">-0.1</span></div>
<div class="vl" style="left:1045px;top:867px;height:47px;background:#c0c0c0"></div>
<div class="cell g" style="left:1046px;top:867px;width:115px;height:46px"><span style="left:4px;top:2px">23.7</span></div>
<div class="vl" style="left:1161px;top:867px;height:47px;background:#c0c0c0"></div>
<div class="cell g" style="left:1162px;top:867px;width:155px;height:46px"><span style="left:4px;top:2px">Реал.</span></div>
<div class="vl" style="left:1317px;top:867px;height:47px;background:#c0c0c0"></div>
<div class="cell g" style="left:1318px;top:867px;width:143px;height:46px"><span style="left:4px;top:2px">1.0</span></div>
<div class="vl" style="left:1461px;top:867px;height:47px;background:#c0c0c0"></div>
<div class="cell g" style="left:1462px;top:867px;width:125px;height:46px"><span style="left:4px;top:2px">Верт.</span></div>
<div class="vl" style="left:1587px;top:867px;height:47px;background:#c0c0c0"></div>
<div class="cell g" style="left:1588px;top:867px;width:180px;height:46px"><span style="left:4px;top:2px">D:\Прочее\Работа</span></div>
<div class="vl" style="left:1768px;top:867px;height:47px;background:#c0c0c0"></div>
<div class="cell g" style="left:1769px;top:867px;width:181px;height:46px"><span style="left:4px;top:2px">vp</span></div>
<div class="vl" style="left:1950px;top:867px;height:47px;background:#c0c0c0"></div>
<div class="hl" style="left:101px;top:913px;width:1819px;background:#c0c0c0"></div>
<div class="abs dith" style="left:2px;top:1001px;width:1918px;height:16px"></div>
<div class="sb" style="left:2px"><svg class="abs" style="left:0;top:0" width="14" height="14" shape-rendering="crispEdges"><path d="M7 3h1v7h-1zM6 4h1v5h-1zM5 5h1v3h-1zM4 6h1v1h-1z" fill="#000"/></svg></div>
<div class="sb" style="left:18px"></div>
<div class="hl" style="left:0;top:1051px;width:1920px;background:#fff"></div>
<div class="tk" style="left:2px;width:51px;font-weight:bold"><span style="left:19px;top:3px;font-size:11.5px;letter-spacing:.4px">Пуск</span><svg class="abs" style="left:2px;top:2px" width="16" height="16" viewBox="0 0 16 16"><path d="M2.5 2.5Q5 1.2 7.6 2.6L6.8 7Q4.2 5.8 1.6 7Z" fill="#e8502a"/><path d="M8.6 3Q11.4 4.2 14.6 2.4L13.8 7Q10.8 8.6 7.8 7.4Z" fill="#6ab543"/><path d="M1.4 8Q4 6.8 6.6 8L5.8 12.4Q3.2 11.2 .6 12.4Z" fill="#3d7fd9"/><path d="M7.6 8.4Q10.6 9.6 13.6 8L12.8 12.6Q9.8 14.2 6.8 12.8Z" fill="#f4c21c"/></svg></div>
<svg class="abs" style="left:56px;top:1054px" width="150" height="24" viewBox="56 1054 150 24"><path d="M61 1058h13l2 2v13h-15z" fill="#1c3fd0"/><rect x="65" y="1058" width="7" height="5" fill="#fff"/><rect x="69" y="1059" width="2" height="3" fill="#1c3fd0"/><rect x="63" y="1065" width="11" height="8" fill="#fff"/><rect x="64" y="1067" width="9" height="1.5" fill="#e03040"/><rect x="64" y="1070" width="9" height="1.5" fill="#e03040"/><rect x="84.500" y="1060.500" width="15" height="11" fill="#2f6fd8" stroke="#7aa2e0"/><rect x="85" y="1069" width="14" height="2" fill="#223"/><rect x="85" y="1068" width="3" height="3" fill="#d8e4f8"/><path d="M114 1059.500L122 1059L118.500 1064L121 1064L108.300 1072.600L112.700 1066.300L110 1066.300Z" fill="#ffee00" stroke="#000" stroke-width="1.100" stroke-linejoin="round"/><circle cx="138.200" cy="1065.700" r="7.700" fill="#e2650e"/><circle cx="139.800" cy="1063.400" r="4.400" fill="#3a74cc"/><circle cx="139.200" cy="1062.200" r="2.200" fill="#6ab4ec"/><path d="M130.600 1063.500q1.200 -4.500 4.400 -5q-.3 2 1.800 3q-2.400 .6 -2.200 2.600q2.400 -.6 3.600 .8q-2.600 2 -.6 4q2.600 1.600 5.800 -1.400q-.6 5.600 -6.200 6q-6.400 -.8 -6.600 -10z" fill="#f4921e"/><circle cx="161.400" cy="1066" r="6.700" fill="#1e86e0"/><ellipse cx="161.400" cy="1063.700" rx="2.700" ry="1.500" fill="#d8ecfc"/><path d="M161 1067.200h8v1.800h-6z" fill="#d4d0c8"/><ellipse cx="161.400" cy="1068.800" rx="2.500" ry="1.100" fill="#d4d0c8"/><path d="M153.800 1072.600q-1.600 -3 4.200 -8.600q5.600 -5.200 10.200 -5.200" fill="none" stroke="#f2b81e" stroke-width="1.500"/><circle cx="184" cy="1066" r="7.700" fill="#f6f6f6"/><path d="M186 1071a7.700 7.700 0 0 0 5 -8" fill="none" stroke="#d8d8d8" stroke-width="1.500"/><path d="M178 1060.600L183.600 1066.400L183.300 1073.400M183.600 1066.400L190.400 1060.200" fill="none" stroke="#f01818" stroke-width="2.800"/></svg>
<div class="tk" style="left:209px;width:160px"><span>Total Commander 7.50a ...</span><svg class="abs" style="left:3px;top:2px" width="16" height="16"><circle cx="8" cy="8" r="7.500" fill="#3a7ed8"/><circle cx="8" cy="7" r="5.500" fill="#7ab8f0"/><text x="2.500" y="11" font-family="Liberation Sans" font-size="10" font-weight="bold" font-style="italic" fill="#12962e">Tc</text></svg></div>
<div class="tk" style="left:372px;width:160px"><span>AutoCAD 2010 - [26.14П...</span><svg class="abs" style="left:3px;top:1px" width="17" height="18"><path d="M2 6h13v11h-13z" fill="#fff" stroke="#c8c8c8" stroke-width=".6"/><text x="-.5" y="10.500" font-family="Liberation Sans" font-size="14" font-weight="bold" fill="#d8141c">A</text><text x="9" y="10" font-family="Liberation Sans" font-size="7.500" font-weight="bold" fill="#d8141c" letter-spacing="-.5">10</text></svg></div>
<div class="tk dith" style="left:535px;width:160px;border-color:#404040 #fff #fff #404040;box-shadow:inset 1px 1px 0 #808080;font-weight:bold"><span style="left:24px;top:4px;letter-spacing:.6px">Mmanagal1_2</span><svg class="abs" style="left:4px;top:3px" width="16" height="16" shape-rendering="crispEdges"><rect x="5" y="0" width="6" height="1" fill="#000"/><rect x="3" y="1" width="2" height="1" fill="#000"/><rect x="5" y="1" width="2" height="1" fill="#fff"/><rect x="7" y="1" width="2" height="1" fill="#0000ff"/><rect x="9" y="1" width="2" height="1" fill="#fff"/><rect x="11" y="1" width="2" height="1" fill="#000"/><rect x="2" y="2" width="1" height="1" fill="#000"/><rect x="3" y="2" width="2" height="1" fill="#fff"/><rect x="5" y="2" width="2" height="1" fill="#0000ff"/><rect x="7" y="2" width="2" height="1" fill="#00ffff"/><rect x="9" y="2" width="2" height="1" fill="#0000ff"/><rect x="11" y="2" width="2" height="1" fill="#fff"/><rect x="13" y="2" width="1" height="1" fill="#000"/><rect x="1" y="3" width="1" height="1" fill="#000"/><rect x="2" y="3" width="2" height="1" fill="#fff"/><rect x="4" y="3" width="1" height="1" fill="#0000ff"/><rect x="5" y="3" width="1" height="1" fill="#00ffff"/><rect x="6" y="3" width="4" height="1" fill="#000"/><rect x="10" y="3" width="1" height="1" fill="#00ffff"/><rect x="11" y="3" width="1" height="1" fill="#0000ff"/><rect x="12" y="3" width="2" height="1" fill="#fff"/><rect x="14" y="3" width="1" height="1" fill="#000"/><rect x="1" y="4" width="1" height="1" fill="#000"/><rect x="2" y="4" width="2" height="1" fill="#fff"/><rect x="4" y="4" width="1" height="1" fill="#0000ff"/><rect x="5" y="4" width="1" height="1" fill="#000"/><rect x="6" y="4" width="4" height="1" fill="#00ffff"/><rect x="10" y="4" width="1" height="1" fill="#000"/><rect x="11" y="4" width="1" height="1" fill="#0000ff"/><rect x="12" y="4" width="2" height="1" fill="#fff"/><rect x="14" y="4" width="1" height="1" fill="#000"/><rect x="0" y="5" width="1" height="1" fill="#000"/><rect x="1" y="5" width="3" height="1" fill="#fff"/><rect x="4" y="5" width="1" height="1" fill="#0000ff"/><rect x="5" y="5" width="6" height="1" fill="#00ffff"/><rect x="11" y="5" width="1" height="1" fill="#0000ff"/><rect x="12" y="5" width="3" height="1" fill="#fff"/><rect x="15" y="5" width="1" height="1" fill="#000"/><rect x="0" y="6" width="1" height="1" fill="#000"/><rect x="1" y="6" width="2" height="1" fill="#fff"/><rect x="3" y="6" width="1" height="1" fill="#000"/><rect x="4" y="6" width="1" height="1" fill="#fff"/><rect x="5" y="6" width="1" height="1" fill="#0000ff"/><rect x="6" y="6" width="4" height="1" fill="#00ffff"/><rect x="10" y="6" width="1" height="1" fill="#0000ff"/><rect x="11" y="6" width="1" height="1" fill="#fff"/><rect x="12" y="6" width="1" height="1" fill="#000"/><rect x="13" y="6" width="2" height="1" fill="#fff"/><rect x="15" y="6" width="1" height="1" fill="#000"/><rect x="0" y="7" width="1" height="1" fill="#000"/><rect x="1" y="7" width="2" height="1" fill="#fff"/><rect x="3" y="7" width="1" height="1" fill="#000"/><rect x="4" y="7" width="2" height="1" fill="#fff"/><rect x="6" y="7" width="1" height="1" fill="#0000ff"/><rect x="7" y="7" width="2" height="1" fill="#00ffff"/><rect x="9" y="7" width="1" height="1" fill="#0000ff"/><rect x="10" y="7" width="2" height="1" fill="#fff"/><rect x="12" y="7" width="1" height="1" fill="#000"/><rect x="13" y="7" width="2" height="1" fill="#fff"/><rect x="15" y="7" width="1" height="1" fill="#000"/><rect x="0" y="8" width="2" height="1" fill="#000"/><rect x="2" y="8" width="1" height="1" fill="#fff"/><rect x="3" y="8" width="1" height="1" fill="#000"/><rect x="4" y="8" width="3" height="1" fill="#fff"/><rect x="7" y="8" width="2" height="1" fill="#00ffff"/><rect x="9" y="8" width="3" height="1" fill="#fff"/><rect x="12" y="8" width="1" height="1" fill="#000"/><rect x="13" y="8" width="1" height="1" fill="#fff"/><rect x="14" y="8" width="2" height="1" fill="#000"/><rect x="0" y="9" width="1" height="1" fill="#000"/><rect x="1" y="9" width="2" height="1" fill="#fff"/><rect x="3" y="9" width="1" height="1" fill="#000"/><rect x="4" y="9" width="3" height="1" fill="#fff"/><rect x="7" y="9" width="2" height="1" fill="#0000ff"/><rect x="9" y="9" width="3" height="1" fill="#fff"/><rect x="12" y="9" width="1" height="1" fill="#000"/><rect x="13" y="9" width="2" height="1" fill="#fff"/><rect x="15" y="9" width="1" height="1" fill="#000"/><rect x="0" y="10" width="1" height="1" fill="#000"/><rect x="1" y="10" width="3" height="1" fill="#fff"/><rect x="4" y="10" width="1" height="1" fill="#000"/><rect x="5" y="10" width="2" height="1" fill="#fff"/><rect x="7" y="10" width="2" height="1" fill="#0000ff"/><rect x="9" y="10" width="2" height="1" fill="#fff"/><rect x="11" y="10" width="1" height="1" fill="#000"/><rect x="12" y="10" width="3" height="1" fill="#fff"/><rect x="15" y="10" width="1" height="1" fill="#000"/><rect x="1" y="11" width="1" height="1" fill="#000"/><rect x="2" y="11" width="3" height="1" fill="#fff"/><rect x="5" y="11" width="1" height="1" fill="#000"/><rect x="6" y="11" width="1" height="1" fill="#0000ff"/><rect x="7" y="11" width="2" height="1" fill="#00ffff"/><rect x="9" y="11" width="1" height="1" fill="#0000ff"/><rect x="10" y="11" width="1" height="1" fill="#000"/><rect x="11" y="11" width="3" height="1" fill="#fff"/><rect x="14" y="11" width="1" height="1" fill="#000"/><rect x="1" y="12" width="1" height="1" fill="#000"/><rect x="2" y="12" width="1" height="1" fill="#fff"/><rect x="3" y="12" width="1" height="1" fill="#c0c0c0"/><rect x="4" y="12" width="2" height="1" fill="#fff"/><rect x="6" y="12" width="1" height="1" fill="#0000ff"/><rect x="7" y="12" width="2" height="1" fill="#00ffff"/><rect x="9" y="12" width="1" height="1" fill="#0000ff"/><rect x="10" y="12" width="2" height="1" fill="#fff"/><rect x="12" y="12" width="1" height="1" fill="#c0c0c0"/><rect x="13" y="12" width="1" height="1" fill="#fff"/><rect x="14" y="12" width="1" height="1" fill="#000"/><rect x="2" y="13" width="1" height="1" fill="#000"/><rect x="3" y="13" width="4" height="1" fill="#fff"/><rect x="7" y="13" width="2" height="1" fill="#0000ff"/><rect x="9" y="13" width="4" height="1" fill="#fff"/><rect x="13" y="13" width="1" height="1" fill="#000"/><rect x="3" y="14" width="2" height="1" fill="#000"/><rect x="5" y="14" width="6" height="1" fill="#fff"/><rect x="11" y="14" width="2" height="1" fill="#000"/><rect x="5" y="15" width="6" height="1" fill="#000"/></svg></div>
<div class="abs" style="left:1620px;top:1059px;font-size:11px;line-height:14px;white-space:nowrap">Рабочий стол</div>
<svg class="abs" style="left:1697px;top:1059px" width="9" height="5" shape-rendering="crispEdges"><path d="M0 0h2v1h-2zM4 0h2v1h-2zM1 1h2v1h-2zM5 1h2v1h-2zM2 2h2v1h-2zM6 2h2v1h-2zM1 3h2v1h-2zM5 3h2v1h-2zM0 4h2v1h-2zM4 4h2v1h-2z" fill="#000"/></svg>
<div class="abs" style="left:1713px;top:1058px;width:16px;height:16px;background:#0a246a;color:#fff;font-size:11px;line-height:17px;text-align:center;overflow:hidden"><span style="display:inline-block;transform:scaleX(.84);transform-origin:50% 50%;margin:0 -2px">EN</span></div>
<div class="vl" style="left:1733px;top:1054px;height:23px;background:#808080"></div><div class="vl" style="left:1734px;top:1054px;height:23px;background:#fff"></div>
<svg class="abs" style="left:1741px;top:1058px" width="16" height="17"><path d="M3 1.500h8.500q2 0 2 2v7.500q0 2 -2 2h-1l.8 2.300l-3.300 -2.300h-5q-2 0 -2 -2v-7.500q0 -2 2 -2z" fill="#fffff0" stroke="#000" stroke-width="1.300"/><path d="M2.500 2.500h10v9.500h-10z" fill="#ffff66" opacity=".45"/><text x="4.300" y="11" font-family="Liberation Sans" font-size="11" font-weight="bold" fill="#000080">?</text></svg>
<div class="vl" style="left:1761px;top:1054px;height:23px;background:#808080"></div><div class="vl" style="left:1762px;top:1054px;height:23px;background:#fff"></div>
<svg class="abs" style="left:1766px;top:1055px" width="14" height="22" shape-rendering="crispEdges"><path d="M4 2h6v1h-6zM4 3h1v1h-1zM9 3h1v3h-1zM8 5h2v1h-2zM2 4h6v1h-6zM2 5h1v3h-1zM7 5h1v3h-1zM2 7h6v1h-6z" fill="#000"/><path d="M3 14h5l-2.500 3z" fill="#000" shape-rendering="auto"/></svg>
<div class="abs" style="left:1784px;top:1054px;width:134px;height:23px;border:1px solid;border-color:#808080 #fff #fff #808080"></div>
<svg class="abs" style="left:1785px;top:1055px" width="100" height="21" viewBox="1785 1055 100 21"><rect x="1792" y="1059" width="10" height="8" fill="#8a8a8a" stroke="#5a5a5a"/><rect x="1788" y="1062" width="10" height="8" fill="#9a9a9a" stroke="#5a5a5a"/><rect x="1791" y="1071" width="5" height="1.500" fill="#5a5a5a"/><path d="M1806 1063h3l5 -4v14l-5 -4h-3z" fill="#e06030" stroke="#301000" stroke-width=".8"/><path d="M1816 1060q3 6 0 12M1818.500 1058.500q4 7.500 0 15" stroke="#000" fill="none" stroke-width="1.100"/><path d="M1830 1058h8q1 0 1 1v8a7 7 0 0 1 -7 7h-8q-1 0 -1 -1v-8a7 7 0 0 1 7 -7z" fill="#e81c28"/><circle cx="1831" cy="1066" r="5.500" fill="#fff"/><circle cx="1831" cy="1066" r="3.200" fill="#e85a20"/><path d="M1842 1063h3l4 -4v14l-4 -4h-3z" fill="#e8e8f0" stroke="#707080" stroke-width=".8"/><circle cx="1852.300" cy="1069.300" r="4.400" fill="#d81c28"/><path d="M1850.300 1067.300l4 4M1854.300 1067.300l-4 4" stroke="#fff" stroke-width="1.500"/><path d="M1859 1066q4 -5 9 -5h7v10h-8q-5 0 -8 -5z" fill="#76b900"/><path d="M1861.500 1066q3 -3.500 6 -3.500q3 0 4 3.500q-1.500 3 -4.500 3q-3 0 -5.500 -3z" fill="none" stroke="#e8f4c0" stroke-width="1"/></svg>
<div class="abs" style="left:1883px;top:1059px;font-size:11px;line-height:14px">10:07</div>
</div></body></html>
